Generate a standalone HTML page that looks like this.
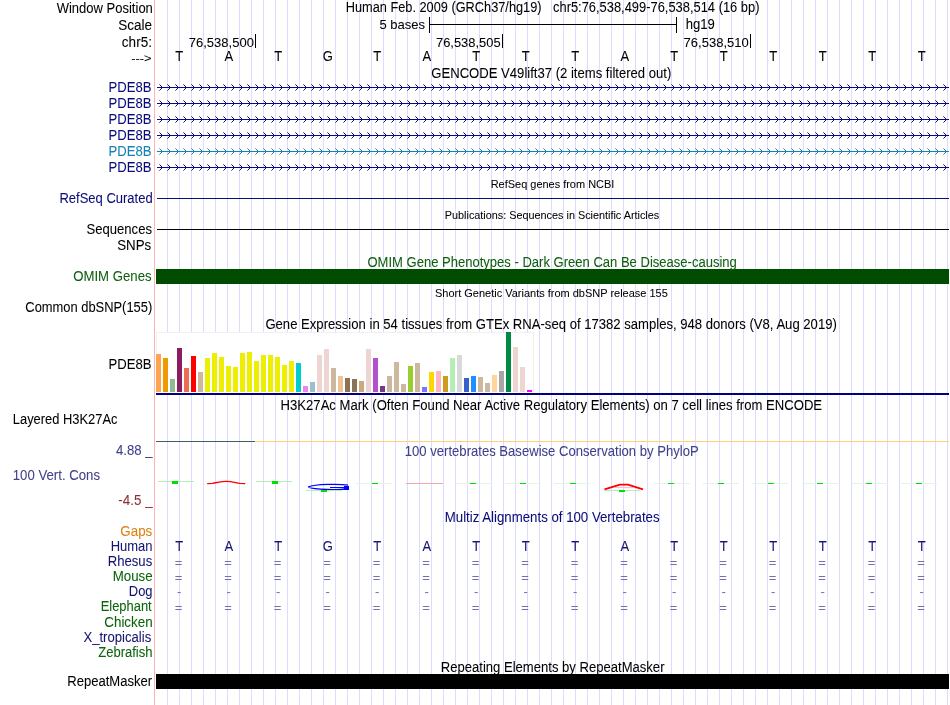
<!DOCTYPE html>
<html><head><meta charset="utf-8"><style>
html,body{margin:0;padding:0;background:#fff;width:950px;height:705px;overflow:hidden}
svg{display:block;will-change:transform}
text{font-family:"Liberation Sans",sans-serif}
</style></head><body>
<svg width="950" height="705" viewBox="0 0 950 705">
<rect width="950" height="705" fill="#fff"/>
<g shape-rendering="crispEdges">
<rect x="167" y="0" width="1" height="705" fill="#dcdcff" />
<rect x="179" y="0" width="1" height="705" fill="#dcdcff" />
<rect x="191" y="0" width="1" height="705" fill="#dcdcff" />
<rect x="203" y="0" width="1" height="705" fill="#dcdcff" />
<rect x="215" y="0" width="1" height="705" fill="#dcdcff" />
<rect x="227" y="0" width="1" height="705" fill="#dcdcff" />
<rect x="239" y="0" width="1" height="705" fill="#dcdcff" />
<rect x="251" y="0" width="1" height="705" fill="#dcdcff" />
<rect x="263" y="0" width="1" height="705" fill="#dcdcff" />
<rect x="275" y="0" width="1" height="705" fill="#dcdcff" />
<rect x="287" y="0" width="1" height="705" fill="#dcdcff" />
<rect x="299" y="0" width="1" height="705" fill="#dcdcff" />
<rect x="311" y="0" width="1" height="705" fill="#dcdcff" />
<rect x="323" y="0" width="1" height="705" fill="#dcdcff" />
<rect x="335" y="0" width="1" height="705" fill="#dcdcff" />
<rect x="347" y="0" width="1" height="705" fill="#dcdcff" />
<rect x="359" y="0" width="1" height="705" fill="#dcdcff" />
<rect x="371" y="0" width="1" height="705" fill="#dcdcff" />
<rect x="383" y="0" width="1" height="705" fill="#dcdcff" />
<rect x="395" y="0" width="1" height="705" fill="#dcdcff" />
<rect x="407" y="0" width="1" height="705" fill="#dcdcff" />
<rect x="419" y="0" width="1" height="705" fill="#dcdcff" />
<rect x="431" y="0" width="1" height="705" fill="#dcdcff" />
<rect x="443" y="0" width="1" height="705" fill="#dcdcff" />
<rect x="455" y="0" width="1" height="705" fill="#dcdcff" />
<rect x="467" y="0" width="1" height="705" fill="#dcdcff" />
<rect x="479" y="0" width="1" height="705" fill="#dcdcff" />
<rect x="491" y="0" width="1" height="705" fill="#dcdcff" />
<rect x="503" y="0" width="1" height="705" fill="#dcdcff" />
<rect x="515" y="0" width="1" height="705" fill="#dcdcff" />
<rect x="527" y="0" width="1" height="705" fill="#dcdcff" />
<rect x="539" y="0" width="1" height="705" fill="#dcdcff" />
<rect x="551" y="0" width="1" height="705" fill="#dcdcff" />
<rect x="563" y="0" width="1" height="705" fill="#dcdcff" />
<rect x="575" y="0" width="1" height="705" fill="#dcdcff" />
<rect x="587" y="0" width="1" height="705" fill="#dcdcff" />
<rect x="599" y="0" width="1" height="705" fill="#dcdcff" />
<rect x="611" y="0" width="1" height="705" fill="#dcdcff" />
<rect x="623" y="0" width="1" height="705" fill="#dcdcff" />
<rect x="635" y="0" width="1" height="705" fill="#dcdcff" />
<rect x="647" y="0" width="1" height="705" fill="#dcdcff" />
<rect x="659" y="0" width="1" height="705" fill="#dcdcff" />
<rect x="671" y="0" width="1" height="705" fill="#dcdcff" />
<rect x="683" y="0" width="1" height="705" fill="#dcdcff" />
<rect x="695" y="0" width="1" height="705" fill="#dcdcff" />
<rect x="707" y="0" width="1" height="705" fill="#dcdcff" />
<rect x="719" y="0" width="1" height="705" fill="#dcdcff" />
<rect x="731" y="0" width="1" height="705" fill="#dcdcff" />
<rect x="743" y="0" width="1" height="705" fill="#dcdcff" />
<rect x="755" y="0" width="1" height="705" fill="#dcdcff" />
<rect x="767" y="0" width="1" height="705" fill="#dcdcff" />
<rect x="779" y="0" width="1" height="705" fill="#dcdcff" />
<rect x="791" y="0" width="1" height="705" fill="#dcdcff" />
<rect x="803" y="0" width="1" height="705" fill="#dcdcff" />
<rect x="815" y="0" width="1" height="705" fill="#dcdcff" />
<rect x="827" y="0" width="1" height="705" fill="#dcdcff" />
<rect x="839" y="0" width="1" height="705" fill="#dcdcff" />
<rect x="851" y="0" width="1" height="705" fill="#dcdcff" />
<rect x="863" y="0" width="1" height="705" fill="#dcdcff" />
<rect x="875" y="0" width="1" height="705" fill="#dcdcff" />
<rect x="887" y="0" width="1" height="705" fill="#dcdcff" />
<rect x="899" y="0" width="1" height="705" fill="#dcdcff" />
<rect x="911" y="0" width="1" height="705" fill="#dcdcff" />
<rect x="923" y="0" width="1" height="705" fill="#dcdcff" />
<rect x="935" y="0" width="1" height="705" fill="#dcdcff" />
<rect x="947" y="0" width="1" height="705" fill="#dcdcff" />
<rect x="154" y="0" width="1" height="705" fill="#ffb4b4" />
<rect x="429" y="17" width="1" height="16" fill="#000" />
<rect x="676" y="17" width="1" height="16" fill="#000" />
<rect x="429" y="24" width="248" height="1" fill="#000" />
<rect x="255" y="34" width="1" height="14" fill="#000" />
<rect x="502" y="34" width="1" height="14" fill="#000" />
<rect x="750" y="34" width="1" height="14" fill="#000" />
<text transform="translate(179.25 61) scale(1 1.1)" font-size="13" text-anchor="middle" fill="#000" stroke="#000" stroke-width="0.05">T</text>
<text transform="translate(228.75 61) scale(1 1.1)" font-size="13" text-anchor="middle" fill="#000" stroke="#000" stroke-width="0.05">A</text>
<text transform="translate(278.25 61) scale(1 1.1)" font-size="13" text-anchor="middle" fill="#000" stroke="#000" stroke-width="0.05">T</text>
<text transform="translate(327.75 61) scale(1 1.1)" font-size="13" text-anchor="middle" fill="#000" stroke="#000" stroke-width="0.05">G</text>
<text transform="translate(377.25 61) scale(1 1.1)" font-size="13" text-anchor="middle" fill="#000" stroke="#000" stroke-width="0.05">T</text>
<text transform="translate(426.75 61) scale(1 1.1)" font-size="13" text-anchor="middle" fill="#000" stroke="#000" stroke-width="0.05">A</text>
<text transform="translate(476.25 61) scale(1 1.1)" font-size="13" text-anchor="middle" fill="#000" stroke="#000" stroke-width="0.05">T</text>
<text transform="translate(525.75 61) scale(1 1.1)" font-size="13" text-anchor="middle" fill="#000" stroke="#000" stroke-width="0.05">T</text>
<text transform="translate(575.25 61) scale(1 1.1)" font-size="13" text-anchor="middle" fill="#000" stroke="#000" stroke-width="0.05">T</text>
<text transform="translate(624.75 61) scale(1 1.1)" font-size="13" text-anchor="middle" fill="#000" stroke="#000" stroke-width="0.05">A</text>
<text transform="translate(674.25 61) scale(1 1.1)" font-size="13" text-anchor="middle" fill="#000" stroke="#000" stroke-width="0.05">T</text>
<text transform="translate(723.75 61) scale(1 1.1)" font-size="13" text-anchor="middle" fill="#000" stroke="#000" stroke-width="0.05">T</text>
<text transform="translate(773.25 61) scale(1 1.1)" font-size="13" text-anchor="middle" fill="#000" stroke="#000" stroke-width="0.05">T</text>
<text transform="translate(822.75 61) scale(1 1.1)" font-size="13" text-anchor="middle" fill="#000" stroke="#000" stroke-width="0.05">T</text>
<text transform="translate(872.25 61) scale(1 1.1)" font-size="13" text-anchor="middle" fill="#000" stroke="#000" stroke-width="0.05">T</text>
<text transform="translate(921.75 61) scale(1 1.1)" font-size="13" text-anchor="middle" fill="#000" stroke="#000" stroke-width="0.05">T</text>
<rect x="157" y="87" width="792" height="1" fill="#0c0c78" />
<path d="M161 86h1v3h-1zM160 85h1v1h-1zM160 89h1v1h-1zM169 86h1v3h-1zM168 85h1v1h-1zM168 89h1v1h-1zM177 86h1v3h-1zM176 85h1v1h-1zM176 89h1v1h-1zM185 86h1v3h-1zM184 85h1v1h-1zM184 89h1v1h-1zM193 86h1v3h-1zM192 85h1v1h-1zM192 89h1v1h-1zM201 86h1v3h-1zM200 85h1v1h-1zM200 89h1v1h-1zM209 86h1v3h-1zM208 85h1v1h-1zM208 89h1v1h-1zM217 86h1v3h-1zM216 85h1v1h-1zM216 89h1v1h-1zM225 86h1v3h-1zM224 85h1v1h-1zM224 89h1v1h-1zM233 86h1v3h-1zM232 85h1v1h-1zM232 89h1v1h-1zM241 86h1v3h-1zM240 85h1v1h-1zM240 89h1v1h-1zM249 86h1v3h-1zM248 85h1v1h-1zM248 89h1v1h-1zM257 86h1v3h-1zM256 85h1v1h-1zM256 89h1v1h-1zM265 86h1v3h-1zM264 85h1v1h-1zM264 89h1v1h-1zM273 86h1v3h-1zM272 85h1v1h-1zM272 89h1v1h-1zM281 86h1v3h-1zM280 85h1v1h-1zM280 89h1v1h-1zM289 86h1v3h-1zM288 85h1v1h-1zM288 89h1v1h-1zM297 86h1v3h-1zM296 85h1v1h-1zM296 89h1v1h-1zM305 86h1v3h-1zM304 85h1v1h-1zM304 89h1v1h-1zM313 86h1v3h-1zM312 85h1v1h-1zM312 89h1v1h-1zM321 86h1v3h-1zM320 85h1v1h-1zM320 89h1v1h-1zM329 86h1v3h-1zM328 85h1v1h-1zM328 89h1v1h-1zM337 86h1v3h-1zM336 85h1v1h-1zM336 89h1v1h-1zM345 86h1v3h-1zM344 85h1v1h-1zM344 89h1v1h-1zM353 86h1v3h-1zM352 85h1v1h-1zM352 89h1v1h-1zM361 86h1v3h-1zM360 85h1v1h-1zM360 89h1v1h-1zM369 86h1v3h-1zM368 85h1v1h-1zM368 89h1v1h-1zM377 86h1v3h-1zM376 85h1v1h-1zM376 89h1v1h-1zM385 86h1v3h-1zM384 85h1v1h-1zM384 89h1v1h-1zM393 86h1v3h-1zM392 85h1v1h-1zM392 89h1v1h-1zM401 86h1v3h-1zM400 85h1v1h-1zM400 89h1v1h-1zM409 86h1v3h-1zM408 85h1v1h-1zM408 89h1v1h-1zM417 86h1v3h-1zM416 85h1v1h-1zM416 89h1v1h-1zM425 86h1v3h-1zM424 85h1v1h-1zM424 89h1v1h-1zM433 86h1v3h-1zM432 85h1v1h-1zM432 89h1v1h-1zM441 86h1v3h-1zM440 85h1v1h-1zM440 89h1v1h-1zM449 86h1v3h-1zM448 85h1v1h-1zM448 89h1v1h-1zM457 86h1v3h-1zM456 85h1v1h-1zM456 89h1v1h-1zM465 86h1v3h-1zM464 85h1v1h-1zM464 89h1v1h-1zM473 86h1v3h-1zM472 85h1v1h-1zM472 89h1v1h-1zM481 86h1v3h-1zM480 85h1v1h-1zM480 89h1v1h-1zM489 86h1v3h-1zM488 85h1v1h-1zM488 89h1v1h-1zM497 86h1v3h-1zM496 85h1v1h-1zM496 89h1v1h-1zM505 86h1v3h-1zM504 85h1v1h-1zM504 89h1v1h-1zM513 86h1v3h-1zM512 85h1v1h-1zM512 89h1v1h-1zM521 86h1v3h-1zM520 85h1v1h-1zM520 89h1v1h-1zM529 86h1v3h-1zM528 85h1v1h-1zM528 89h1v1h-1zM537 86h1v3h-1zM536 85h1v1h-1zM536 89h1v1h-1zM545 86h1v3h-1zM544 85h1v1h-1zM544 89h1v1h-1zM553 86h1v3h-1zM552 85h1v1h-1zM552 89h1v1h-1zM561 86h1v3h-1zM560 85h1v1h-1zM560 89h1v1h-1zM569 86h1v3h-1zM568 85h1v1h-1zM568 89h1v1h-1zM577 86h1v3h-1zM576 85h1v1h-1zM576 89h1v1h-1zM585 86h1v3h-1zM584 85h1v1h-1zM584 89h1v1h-1zM593 86h1v3h-1zM592 85h1v1h-1zM592 89h1v1h-1zM601 86h1v3h-1zM600 85h1v1h-1zM600 89h1v1h-1zM609 86h1v3h-1zM608 85h1v1h-1zM608 89h1v1h-1zM617 86h1v3h-1zM616 85h1v1h-1zM616 89h1v1h-1zM625 86h1v3h-1zM624 85h1v1h-1zM624 89h1v1h-1zM633 86h1v3h-1zM632 85h1v1h-1zM632 89h1v1h-1zM641 86h1v3h-1zM640 85h1v1h-1zM640 89h1v1h-1zM649 86h1v3h-1zM648 85h1v1h-1zM648 89h1v1h-1zM657 86h1v3h-1zM656 85h1v1h-1zM656 89h1v1h-1zM665 86h1v3h-1zM664 85h1v1h-1zM664 89h1v1h-1zM673 86h1v3h-1zM672 85h1v1h-1zM672 89h1v1h-1zM681 86h1v3h-1zM680 85h1v1h-1zM680 89h1v1h-1zM689 86h1v3h-1zM688 85h1v1h-1zM688 89h1v1h-1zM697 86h1v3h-1zM696 85h1v1h-1zM696 89h1v1h-1zM705 86h1v3h-1zM704 85h1v1h-1zM704 89h1v1h-1zM713 86h1v3h-1zM712 85h1v1h-1zM712 89h1v1h-1zM721 86h1v3h-1zM720 85h1v1h-1zM720 89h1v1h-1zM729 86h1v3h-1zM728 85h1v1h-1zM728 89h1v1h-1zM737 86h1v3h-1zM736 85h1v1h-1zM736 89h1v1h-1zM745 86h1v3h-1zM744 85h1v1h-1zM744 89h1v1h-1zM753 86h1v3h-1zM752 85h1v1h-1zM752 89h1v1h-1zM761 86h1v3h-1zM760 85h1v1h-1zM760 89h1v1h-1zM769 86h1v3h-1zM768 85h1v1h-1zM768 89h1v1h-1zM777 86h1v3h-1zM776 85h1v1h-1zM776 89h1v1h-1zM785 86h1v3h-1zM784 85h1v1h-1zM784 89h1v1h-1zM793 86h1v3h-1zM792 85h1v1h-1zM792 89h1v1h-1zM801 86h1v3h-1zM800 85h1v1h-1zM800 89h1v1h-1zM809 86h1v3h-1zM808 85h1v1h-1zM808 89h1v1h-1zM817 86h1v3h-1zM816 85h1v1h-1zM816 89h1v1h-1zM825 86h1v3h-1zM824 85h1v1h-1zM824 89h1v1h-1zM833 86h1v3h-1zM832 85h1v1h-1zM832 89h1v1h-1zM841 86h1v3h-1zM840 85h1v1h-1zM840 89h1v1h-1zM849 86h1v3h-1zM848 85h1v1h-1zM848 89h1v1h-1zM857 86h1v3h-1zM856 85h1v1h-1zM856 89h1v1h-1zM865 86h1v3h-1zM864 85h1v1h-1zM864 89h1v1h-1zM873 86h1v3h-1zM872 85h1v1h-1zM872 89h1v1h-1zM881 86h1v3h-1zM880 85h1v1h-1zM880 89h1v1h-1zM889 86h1v3h-1zM888 85h1v1h-1zM888 89h1v1h-1zM897 86h1v3h-1zM896 85h1v1h-1zM896 89h1v1h-1zM905 86h1v3h-1zM904 85h1v1h-1zM904 89h1v1h-1zM913 86h1v3h-1zM912 85h1v1h-1zM912 89h1v1h-1zM921 86h1v3h-1zM920 85h1v1h-1zM920 89h1v1h-1zM929 86h1v3h-1zM928 85h1v1h-1zM928 89h1v1h-1zM937 86h1v3h-1zM936 85h1v1h-1zM936 89h1v1h-1zM945 86h1v3h-1zM944 85h1v1h-1zM944 89h1v1h-1z" fill="#0c0c78"/>
<path d="M159 84h1v1h-1zM159 90h1v1h-1zM167 84h1v1h-1zM167 90h1v1h-1zM175 84h1v1h-1zM175 90h1v1h-1zM183 84h1v1h-1zM183 90h1v1h-1zM191 84h1v1h-1zM191 90h1v1h-1zM199 84h1v1h-1zM199 90h1v1h-1zM207 84h1v1h-1zM207 90h1v1h-1zM215 84h1v1h-1zM215 90h1v1h-1zM223 84h1v1h-1zM223 90h1v1h-1zM231 84h1v1h-1zM231 90h1v1h-1zM239 84h1v1h-1zM239 90h1v1h-1zM247 84h1v1h-1zM247 90h1v1h-1zM255 84h1v1h-1zM255 90h1v1h-1zM263 84h1v1h-1zM263 90h1v1h-1zM271 84h1v1h-1zM271 90h1v1h-1zM279 84h1v1h-1zM279 90h1v1h-1zM287 84h1v1h-1zM287 90h1v1h-1zM295 84h1v1h-1zM295 90h1v1h-1zM303 84h1v1h-1zM303 90h1v1h-1zM311 84h1v1h-1zM311 90h1v1h-1zM319 84h1v1h-1zM319 90h1v1h-1zM327 84h1v1h-1zM327 90h1v1h-1zM335 84h1v1h-1zM335 90h1v1h-1zM343 84h1v1h-1zM343 90h1v1h-1zM351 84h1v1h-1zM351 90h1v1h-1zM359 84h1v1h-1zM359 90h1v1h-1zM367 84h1v1h-1zM367 90h1v1h-1zM375 84h1v1h-1zM375 90h1v1h-1zM383 84h1v1h-1zM383 90h1v1h-1zM391 84h1v1h-1zM391 90h1v1h-1zM399 84h1v1h-1zM399 90h1v1h-1zM407 84h1v1h-1zM407 90h1v1h-1zM415 84h1v1h-1zM415 90h1v1h-1zM423 84h1v1h-1zM423 90h1v1h-1zM431 84h1v1h-1zM431 90h1v1h-1zM439 84h1v1h-1zM439 90h1v1h-1zM447 84h1v1h-1zM447 90h1v1h-1zM455 84h1v1h-1zM455 90h1v1h-1zM463 84h1v1h-1zM463 90h1v1h-1zM471 84h1v1h-1zM471 90h1v1h-1zM479 84h1v1h-1zM479 90h1v1h-1zM487 84h1v1h-1zM487 90h1v1h-1zM495 84h1v1h-1zM495 90h1v1h-1zM503 84h1v1h-1zM503 90h1v1h-1zM511 84h1v1h-1zM511 90h1v1h-1zM519 84h1v1h-1zM519 90h1v1h-1zM527 84h1v1h-1zM527 90h1v1h-1zM535 84h1v1h-1zM535 90h1v1h-1zM543 84h1v1h-1zM543 90h1v1h-1zM551 84h1v1h-1zM551 90h1v1h-1zM559 84h1v1h-1zM559 90h1v1h-1zM567 84h1v1h-1zM567 90h1v1h-1zM575 84h1v1h-1zM575 90h1v1h-1zM583 84h1v1h-1zM583 90h1v1h-1zM591 84h1v1h-1zM591 90h1v1h-1zM599 84h1v1h-1zM599 90h1v1h-1zM607 84h1v1h-1zM607 90h1v1h-1zM615 84h1v1h-1zM615 90h1v1h-1zM623 84h1v1h-1zM623 90h1v1h-1zM631 84h1v1h-1zM631 90h1v1h-1zM639 84h1v1h-1zM639 90h1v1h-1zM647 84h1v1h-1zM647 90h1v1h-1zM655 84h1v1h-1zM655 90h1v1h-1zM663 84h1v1h-1zM663 90h1v1h-1zM671 84h1v1h-1zM671 90h1v1h-1zM679 84h1v1h-1zM679 90h1v1h-1zM687 84h1v1h-1zM687 90h1v1h-1zM695 84h1v1h-1zM695 90h1v1h-1zM703 84h1v1h-1zM703 90h1v1h-1zM711 84h1v1h-1zM711 90h1v1h-1zM719 84h1v1h-1zM719 90h1v1h-1zM727 84h1v1h-1zM727 90h1v1h-1zM735 84h1v1h-1zM735 90h1v1h-1zM743 84h1v1h-1zM743 90h1v1h-1zM751 84h1v1h-1zM751 90h1v1h-1zM759 84h1v1h-1zM759 90h1v1h-1zM767 84h1v1h-1zM767 90h1v1h-1zM775 84h1v1h-1zM775 90h1v1h-1zM783 84h1v1h-1zM783 90h1v1h-1zM791 84h1v1h-1zM791 90h1v1h-1zM799 84h1v1h-1zM799 90h1v1h-1zM807 84h1v1h-1zM807 90h1v1h-1zM815 84h1v1h-1zM815 90h1v1h-1zM823 84h1v1h-1zM823 90h1v1h-1zM831 84h1v1h-1zM831 90h1v1h-1zM839 84h1v1h-1zM839 90h1v1h-1zM847 84h1v1h-1zM847 90h1v1h-1zM855 84h1v1h-1zM855 90h1v1h-1zM863 84h1v1h-1zM863 90h1v1h-1zM871 84h1v1h-1zM871 90h1v1h-1zM879 84h1v1h-1zM879 90h1v1h-1zM887 84h1v1h-1zM887 90h1v1h-1zM895 84h1v1h-1zM895 90h1v1h-1zM903 84h1v1h-1zM903 90h1v1h-1zM911 84h1v1h-1zM911 90h1v1h-1zM919 84h1v1h-1zM919 90h1v1h-1zM927 84h1v1h-1zM927 90h1v1h-1zM935 84h1v1h-1zM935 90h1v1h-1zM943 84h1v1h-1zM943 90h1v1h-1z" fill="#0c0c78" fill-opacity="0.55"/>
<rect x="157" y="103" width="792" height="1" fill="#0c0c78" />
<path d="M161 102h1v3h-1zM160 101h1v1h-1zM160 105h1v1h-1zM169 102h1v3h-1zM168 101h1v1h-1zM168 105h1v1h-1zM177 102h1v3h-1zM176 101h1v1h-1zM176 105h1v1h-1zM185 102h1v3h-1zM184 101h1v1h-1zM184 105h1v1h-1zM193 102h1v3h-1zM192 101h1v1h-1zM192 105h1v1h-1zM201 102h1v3h-1zM200 101h1v1h-1zM200 105h1v1h-1zM209 102h1v3h-1zM208 101h1v1h-1zM208 105h1v1h-1zM217 102h1v3h-1zM216 101h1v1h-1zM216 105h1v1h-1zM225 102h1v3h-1zM224 101h1v1h-1zM224 105h1v1h-1zM233 102h1v3h-1zM232 101h1v1h-1zM232 105h1v1h-1zM241 102h1v3h-1zM240 101h1v1h-1zM240 105h1v1h-1zM249 102h1v3h-1zM248 101h1v1h-1zM248 105h1v1h-1zM257 102h1v3h-1zM256 101h1v1h-1zM256 105h1v1h-1zM265 102h1v3h-1zM264 101h1v1h-1zM264 105h1v1h-1zM273 102h1v3h-1zM272 101h1v1h-1zM272 105h1v1h-1zM281 102h1v3h-1zM280 101h1v1h-1zM280 105h1v1h-1zM289 102h1v3h-1zM288 101h1v1h-1zM288 105h1v1h-1zM297 102h1v3h-1zM296 101h1v1h-1zM296 105h1v1h-1zM305 102h1v3h-1zM304 101h1v1h-1zM304 105h1v1h-1zM313 102h1v3h-1zM312 101h1v1h-1zM312 105h1v1h-1zM321 102h1v3h-1zM320 101h1v1h-1zM320 105h1v1h-1zM329 102h1v3h-1zM328 101h1v1h-1zM328 105h1v1h-1zM337 102h1v3h-1zM336 101h1v1h-1zM336 105h1v1h-1zM345 102h1v3h-1zM344 101h1v1h-1zM344 105h1v1h-1zM353 102h1v3h-1zM352 101h1v1h-1zM352 105h1v1h-1zM361 102h1v3h-1zM360 101h1v1h-1zM360 105h1v1h-1zM369 102h1v3h-1zM368 101h1v1h-1zM368 105h1v1h-1zM377 102h1v3h-1zM376 101h1v1h-1zM376 105h1v1h-1zM385 102h1v3h-1zM384 101h1v1h-1zM384 105h1v1h-1zM393 102h1v3h-1zM392 101h1v1h-1zM392 105h1v1h-1zM401 102h1v3h-1zM400 101h1v1h-1zM400 105h1v1h-1zM409 102h1v3h-1zM408 101h1v1h-1zM408 105h1v1h-1zM417 102h1v3h-1zM416 101h1v1h-1zM416 105h1v1h-1zM425 102h1v3h-1zM424 101h1v1h-1zM424 105h1v1h-1zM433 102h1v3h-1zM432 101h1v1h-1zM432 105h1v1h-1zM441 102h1v3h-1zM440 101h1v1h-1zM440 105h1v1h-1zM449 102h1v3h-1zM448 101h1v1h-1zM448 105h1v1h-1zM457 102h1v3h-1zM456 101h1v1h-1zM456 105h1v1h-1zM465 102h1v3h-1zM464 101h1v1h-1zM464 105h1v1h-1zM473 102h1v3h-1zM472 101h1v1h-1zM472 105h1v1h-1zM481 102h1v3h-1zM480 101h1v1h-1zM480 105h1v1h-1zM489 102h1v3h-1zM488 101h1v1h-1zM488 105h1v1h-1zM497 102h1v3h-1zM496 101h1v1h-1zM496 105h1v1h-1zM505 102h1v3h-1zM504 101h1v1h-1zM504 105h1v1h-1zM513 102h1v3h-1zM512 101h1v1h-1zM512 105h1v1h-1zM521 102h1v3h-1zM520 101h1v1h-1zM520 105h1v1h-1zM529 102h1v3h-1zM528 101h1v1h-1zM528 105h1v1h-1zM537 102h1v3h-1zM536 101h1v1h-1zM536 105h1v1h-1zM545 102h1v3h-1zM544 101h1v1h-1zM544 105h1v1h-1zM553 102h1v3h-1zM552 101h1v1h-1zM552 105h1v1h-1zM561 102h1v3h-1zM560 101h1v1h-1zM560 105h1v1h-1zM569 102h1v3h-1zM568 101h1v1h-1zM568 105h1v1h-1zM577 102h1v3h-1zM576 101h1v1h-1zM576 105h1v1h-1zM585 102h1v3h-1zM584 101h1v1h-1zM584 105h1v1h-1zM593 102h1v3h-1zM592 101h1v1h-1zM592 105h1v1h-1zM601 102h1v3h-1zM600 101h1v1h-1zM600 105h1v1h-1zM609 102h1v3h-1zM608 101h1v1h-1zM608 105h1v1h-1zM617 102h1v3h-1zM616 101h1v1h-1zM616 105h1v1h-1zM625 102h1v3h-1zM624 101h1v1h-1zM624 105h1v1h-1zM633 102h1v3h-1zM632 101h1v1h-1zM632 105h1v1h-1zM641 102h1v3h-1zM640 101h1v1h-1zM640 105h1v1h-1zM649 102h1v3h-1zM648 101h1v1h-1zM648 105h1v1h-1zM657 102h1v3h-1zM656 101h1v1h-1zM656 105h1v1h-1zM665 102h1v3h-1zM664 101h1v1h-1zM664 105h1v1h-1zM673 102h1v3h-1zM672 101h1v1h-1zM672 105h1v1h-1zM681 102h1v3h-1zM680 101h1v1h-1zM680 105h1v1h-1zM689 102h1v3h-1zM688 101h1v1h-1zM688 105h1v1h-1zM697 102h1v3h-1zM696 101h1v1h-1zM696 105h1v1h-1zM705 102h1v3h-1zM704 101h1v1h-1zM704 105h1v1h-1zM713 102h1v3h-1zM712 101h1v1h-1zM712 105h1v1h-1zM721 102h1v3h-1zM720 101h1v1h-1zM720 105h1v1h-1zM729 102h1v3h-1zM728 101h1v1h-1zM728 105h1v1h-1zM737 102h1v3h-1zM736 101h1v1h-1zM736 105h1v1h-1zM745 102h1v3h-1zM744 101h1v1h-1zM744 105h1v1h-1zM753 102h1v3h-1zM752 101h1v1h-1zM752 105h1v1h-1zM761 102h1v3h-1zM760 101h1v1h-1zM760 105h1v1h-1zM769 102h1v3h-1zM768 101h1v1h-1zM768 105h1v1h-1zM777 102h1v3h-1zM776 101h1v1h-1zM776 105h1v1h-1zM785 102h1v3h-1zM784 101h1v1h-1zM784 105h1v1h-1zM793 102h1v3h-1zM792 101h1v1h-1zM792 105h1v1h-1zM801 102h1v3h-1zM800 101h1v1h-1zM800 105h1v1h-1zM809 102h1v3h-1zM808 101h1v1h-1zM808 105h1v1h-1zM817 102h1v3h-1zM816 101h1v1h-1zM816 105h1v1h-1zM825 102h1v3h-1zM824 101h1v1h-1zM824 105h1v1h-1zM833 102h1v3h-1zM832 101h1v1h-1zM832 105h1v1h-1zM841 102h1v3h-1zM840 101h1v1h-1zM840 105h1v1h-1zM849 102h1v3h-1zM848 101h1v1h-1zM848 105h1v1h-1zM857 102h1v3h-1zM856 101h1v1h-1zM856 105h1v1h-1zM865 102h1v3h-1zM864 101h1v1h-1zM864 105h1v1h-1zM873 102h1v3h-1zM872 101h1v1h-1zM872 105h1v1h-1zM881 102h1v3h-1zM880 101h1v1h-1zM880 105h1v1h-1zM889 102h1v3h-1zM888 101h1v1h-1zM888 105h1v1h-1zM897 102h1v3h-1zM896 101h1v1h-1zM896 105h1v1h-1zM905 102h1v3h-1zM904 101h1v1h-1zM904 105h1v1h-1zM913 102h1v3h-1zM912 101h1v1h-1zM912 105h1v1h-1zM921 102h1v3h-1zM920 101h1v1h-1zM920 105h1v1h-1zM929 102h1v3h-1zM928 101h1v1h-1zM928 105h1v1h-1zM937 102h1v3h-1zM936 101h1v1h-1zM936 105h1v1h-1zM945 102h1v3h-1zM944 101h1v1h-1zM944 105h1v1h-1z" fill="#0c0c78"/>
<path d="M159 100h1v1h-1zM159 106h1v1h-1zM167 100h1v1h-1zM167 106h1v1h-1zM175 100h1v1h-1zM175 106h1v1h-1zM183 100h1v1h-1zM183 106h1v1h-1zM191 100h1v1h-1zM191 106h1v1h-1zM199 100h1v1h-1zM199 106h1v1h-1zM207 100h1v1h-1zM207 106h1v1h-1zM215 100h1v1h-1zM215 106h1v1h-1zM223 100h1v1h-1zM223 106h1v1h-1zM231 100h1v1h-1zM231 106h1v1h-1zM239 100h1v1h-1zM239 106h1v1h-1zM247 100h1v1h-1zM247 106h1v1h-1zM255 100h1v1h-1zM255 106h1v1h-1zM263 100h1v1h-1zM263 106h1v1h-1zM271 100h1v1h-1zM271 106h1v1h-1zM279 100h1v1h-1zM279 106h1v1h-1zM287 100h1v1h-1zM287 106h1v1h-1zM295 100h1v1h-1zM295 106h1v1h-1zM303 100h1v1h-1zM303 106h1v1h-1zM311 100h1v1h-1zM311 106h1v1h-1zM319 100h1v1h-1zM319 106h1v1h-1zM327 100h1v1h-1zM327 106h1v1h-1zM335 100h1v1h-1zM335 106h1v1h-1zM343 100h1v1h-1zM343 106h1v1h-1zM351 100h1v1h-1zM351 106h1v1h-1zM359 100h1v1h-1zM359 106h1v1h-1zM367 100h1v1h-1zM367 106h1v1h-1zM375 100h1v1h-1zM375 106h1v1h-1zM383 100h1v1h-1zM383 106h1v1h-1zM391 100h1v1h-1zM391 106h1v1h-1zM399 100h1v1h-1zM399 106h1v1h-1zM407 100h1v1h-1zM407 106h1v1h-1zM415 100h1v1h-1zM415 106h1v1h-1zM423 100h1v1h-1zM423 106h1v1h-1zM431 100h1v1h-1zM431 106h1v1h-1zM439 100h1v1h-1zM439 106h1v1h-1zM447 100h1v1h-1zM447 106h1v1h-1zM455 100h1v1h-1zM455 106h1v1h-1zM463 100h1v1h-1zM463 106h1v1h-1zM471 100h1v1h-1zM471 106h1v1h-1zM479 100h1v1h-1zM479 106h1v1h-1zM487 100h1v1h-1zM487 106h1v1h-1zM495 100h1v1h-1zM495 106h1v1h-1zM503 100h1v1h-1zM503 106h1v1h-1zM511 100h1v1h-1zM511 106h1v1h-1zM519 100h1v1h-1zM519 106h1v1h-1zM527 100h1v1h-1zM527 106h1v1h-1zM535 100h1v1h-1zM535 106h1v1h-1zM543 100h1v1h-1zM543 106h1v1h-1zM551 100h1v1h-1zM551 106h1v1h-1zM559 100h1v1h-1zM559 106h1v1h-1zM567 100h1v1h-1zM567 106h1v1h-1zM575 100h1v1h-1zM575 106h1v1h-1zM583 100h1v1h-1zM583 106h1v1h-1zM591 100h1v1h-1zM591 106h1v1h-1zM599 100h1v1h-1zM599 106h1v1h-1zM607 100h1v1h-1zM607 106h1v1h-1zM615 100h1v1h-1zM615 106h1v1h-1zM623 100h1v1h-1zM623 106h1v1h-1zM631 100h1v1h-1zM631 106h1v1h-1zM639 100h1v1h-1zM639 106h1v1h-1zM647 100h1v1h-1zM647 106h1v1h-1zM655 100h1v1h-1zM655 106h1v1h-1zM663 100h1v1h-1zM663 106h1v1h-1zM671 100h1v1h-1zM671 106h1v1h-1zM679 100h1v1h-1zM679 106h1v1h-1zM687 100h1v1h-1zM687 106h1v1h-1zM695 100h1v1h-1zM695 106h1v1h-1zM703 100h1v1h-1zM703 106h1v1h-1zM711 100h1v1h-1zM711 106h1v1h-1zM719 100h1v1h-1zM719 106h1v1h-1zM727 100h1v1h-1zM727 106h1v1h-1zM735 100h1v1h-1zM735 106h1v1h-1zM743 100h1v1h-1zM743 106h1v1h-1zM751 100h1v1h-1zM751 106h1v1h-1zM759 100h1v1h-1zM759 106h1v1h-1zM767 100h1v1h-1zM767 106h1v1h-1zM775 100h1v1h-1zM775 106h1v1h-1zM783 100h1v1h-1zM783 106h1v1h-1zM791 100h1v1h-1zM791 106h1v1h-1zM799 100h1v1h-1zM799 106h1v1h-1zM807 100h1v1h-1zM807 106h1v1h-1zM815 100h1v1h-1zM815 106h1v1h-1zM823 100h1v1h-1zM823 106h1v1h-1zM831 100h1v1h-1zM831 106h1v1h-1zM839 100h1v1h-1zM839 106h1v1h-1zM847 100h1v1h-1zM847 106h1v1h-1zM855 100h1v1h-1zM855 106h1v1h-1zM863 100h1v1h-1zM863 106h1v1h-1zM871 100h1v1h-1zM871 106h1v1h-1zM879 100h1v1h-1zM879 106h1v1h-1zM887 100h1v1h-1zM887 106h1v1h-1zM895 100h1v1h-1zM895 106h1v1h-1zM903 100h1v1h-1zM903 106h1v1h-1zM911 100h1v1h-1zM911 106h1v1h-1zM919 100h1v1h-1zM919 106h1v1h-1zM927 100h1v1h-1zM927 106h1v1h-1zM935 100h1v1h-1zM935 106h1v1h-1zM943 100h1v1h-1zM943 106h1v1h-1z" fill="#0c0c78" fill-opacity="0.55"/>
<rect x="157" y="119" width="792" height="1" fill="#0c0c78" />
<path d="M161 118h1v3h-1zM160 117h1v1h-1zM160 121h1v1h-1zM169 118h1v3h-1zM168 117h1v1h-1zM168 121h1v1h-1zM177 118h1v3h-1zM176 117h1v1h-1zM176 121h1v1h-1zM185 118h1v3h-1zM184 117h1v1h-1zM184 121h1v1h-1zM193 118h1v3h-1zM192 117h1v1h-1zM192 121h1v1h-1zM201 118h1v3h-1zM200 117h1v1h-1zM200 121h1v1h-1zM209 118h1v3h-1zM208 117h1v1h-1zM208 121h1v1h-1zM217 118h1v3h-1zM216 117h1v1h-1zM216 121h1v1h-1zM225 118h1v3h-1zM224 117h1v1h-1zM224 121h1v1h-1zM233 118h1v3h-1zM232 117h1v1h-1zM232 121h1v1h-1zM241 118h1v3h-1zM240 117h1v1h-1zM240 121h1v1h-1zM249 118h1v3h-1zM248 117h1v1h-1zM248 121h1v1h-1zM257 118h1v3h-1zM256 117h1v1h-1zM256 121h1v1h-1zM265 118h1v3h-1zM264 117h1v1h-1zM264 121h1v1h-1zM273 118h1v3h-1zM272 117h1v1h-1zM272 121h1v1h-1zM281 118h1v3h-1zM280 117h1v1h-1zM280 121h1v1h-1zM289 118h1v3h-1zM288 117h1v1h-1zM288 121h1v1h-1zM297 118h1v3h-1zM296 117h1v1h-1zM296 121h1v1h-1zM305 118h1v3h-1zM304 117h1v1h-1zM304 121h1v1h-1zM313 118h1v3h-1zM312 117h1v1h-1zM312 121h1v1h-1zM321 118h1v3h-1zM320 117h1v1h-1zM320 121h1v1h-1zM329 118h1v3h-1zM328 117h1v1h-1zM328 121h1v1h-1zM337 118h1v3h-1zM336 117h1v1h-1zM336 121h1v1h-1zM345 118h1v3h-1zM344 117h1v1h-1zM344 121h1v1h-1zM353 118h1v3h-1zM352 117h1v1h-1zM352 121h1v1h-1zM361 118h1v3h-1zM360 117h1v1h-1zM360 121h1v1h-1zM369 118h1v3h-1zM368 117h1v1h-1zM368 121h1v1h-1zM377 118h1v3h-1zM376 117h1v1h-1zM376 121h1v1h-1zM385 118h1v3h-1zM384 117h1v1h-1zM384 121h1v1h-1zM393 118h1v3h-1zM392 117h1v1h-1zM392 121h1v1h-1zM401 118h1v3h-1zM400 117h1v1h-1zM400 121h1v1h-1zM409 118h1v3h-1zM408 117h1v1h-1zM408 121h1v1h-1zM417 118h1v3h-1zM416 117h1v1h-1zM416 121h1v1h-1zM425 118h1v3h-1zM424 117h1v1h-1zM424 121h1v1h-1zM433 118h1v3h-1zM432 117h1v1h-1zM432 121h1v1h-1zM441 118h1v3h-1zM440 117h1v1h-1zM440 121h1v1h-1zM449 118h1v3h-1zM448 117h1v1h-1zM448 121h1v1h-1zM457 118h1v3h-1zM456 117h1v1h-1zM456 121h1v1h-1zM465 118h1v3h-1zM464 117h1v1h-1zM464 121h1v1h-1zM473 118h1v3h-1zM472 117h1v1h-1zM472 121h1v1h-1zM481 118h1v3h-1zM480 117h1v1h-1zM480 121h1v1h-1zM489 118h1v3h-1zM488 117h1v1h-1zM488 121h1v1h-1zM497 118h1v3h-1zM496 117h1v1h-1zM496 121h1v1h-1zM505 118h1v3h-1zM504 117h1v1h-1zM504 121h1v1h-1zM513 118h1v3h-1zM512 117h1v1h-1zM512 121h1v1h-1zM521 118h1v3h-1zM520 117h1v1h-1zM520 121h1v1h-1zM529 118h1v3h-1zM528 117h1v1h-1zM528 121h1v1h-1zM537 118h1v3h-1zM536 117h1v1h-1zM536 121h1v1h-1zM545 118h1v3h-1zM544 117h1v1h-1zM544 121h1v1h-1zM553 118h1v3h-1zM552 117h1v1h-1zM552 121h1v1h-1zM561 118h1v3h-1zM560 117h1v1h-1zM560 121h1v1h-1zM569 118h1v3h-1zM568 117h1v1h-1zM568 121h1v1h-1zM577 118h1v3h-1zM576 117h1v1h-1zM576 121h1v1h-1zM585 118h1v3h-1zM584 117h1v1h-1zM584 121h1v1h-1zM593 118h1v3h-1zM592 117h1v1h-1zM592 121h1v1h-1zM601 118h1v3h-1zM600 117h1v1h-1zM600 121h1v1h-1zM609 118h1v3h-1zM608 117h1v1h-1zM608 121h1v1h-1zM617 118h1v3h-1zM616 117h1v1h-1zM616 121h1v1h-1zM625 118h1v3h-1zM624 117h1v1h-1zM624 121h1v1h-1zM633 118h1v3h-1zM632 117h1v1h-1zM632 121h1v1h-1zM641 118h1v3h-1zM640 117h1v1h-1zM640 121h1v1h-1zM649 118h1v3h-1zM648 117h1v1h-1zM648 121h1v1h-1zM657 118h1v3h-1zM656 117h1v1h-1zM656 121h1v1h-1zM665 118h1v3h-1zM664 117h1v1h-1zM664 121h1v1h-1zM673 118h1v3h-1zM672 117h1v1h-1zM672 121h1v1h-1zM681 118h1v3h-1zM680 117h1v1h-1zM680 121h1v1h-1zM689 118h1v3h-1zM688 117h1v1h-1zM688 121h1v1h-1zM697 118h1v3h-1zM696 117h1v1h-1zM696 121h1v1h-1zM705 118h1v3h-1zM704 117h1v1h-1zM704 121h1v1h-1zM713 118h1v3h-1zM712 117h1v1h-1zM712 121h1v1h-1zM721 118h1v3h-1zM720 117h1v1h-1zM720 121h1v1h-1zM729 118h1v3h-1zM728 117h1v1h-1zM728 121h1v1h-1zM737 118h1v3h-1zM736 117h1v1h-1zM736 121h1v1h-1zM745 118h1v3h-1zM744 117h1v1h-1zM744 121h1v1h-1zM753 118h1v3h-1zM752 117h1v1h-1zM752 121h1v1h-1zM761 118h1v3h-1zM760 117h1v1h-1zM760 121h1v1h-1zM769 118h1v3h-1zM768 117h1v1h-1zM768 121h1v1h-1zM777 118h1v3h-1zM776 117h1v1h-1zM776 121h1v1h-1zM785 118h1v3h-1zM784 117h1v1h-1zM784 121h1v1h-1zM793 118h1v3h-1zM792 117h1v1h-1zM792 121h1v1h-1zM801 118h1v3h-1zM800 117h1v1h-1zM800 121h1v1h-1zM809 118h1v3h-1zM808 117h1v1h-1zM808 121h1v1h-1zM817 118h1v3h-1zM816 117h1v1h-1zM816 121h1v1h-1zM825 118h1v3h-1zM824 117h1v1h-1zM824 121h1v1h-1zM833 118h1v3h-1zM832 117h1v1h-1zM832 121h1v1h-1zM841 118h1v3h-1zM840 117h1v1h-1zM840 121h1v1h-1zM849 118h1v3h-1zM848 117h1v1h-1zM848 121h1v1h-1zM857 118h1v3h-1zM856 117h1v1h-1zM856 121h1v1h-1zM865 118h1v3h-1zM864 117h1v1h-1zM864 121h1v1h-1zM873 118h1v3h-1zM872 117h1v1h-1zM872 121h1v1h-1zM881 118h1v3h-1zM880 117h1v1h-1zM880 121h1v1h-1zM889 118h1v3h-1zM888 117h1v1h-1zM888 121h1v1h-1zM897 118h1v3h-1zM896 117h1v1h-1zM896 121h1v1h-1zM905 118h1v3h-1zM904 117h1v1h-1zM904 121h1v1h-1zM913 118h1v3h-1zM912 117h1v1h-1zM912 121h1v1h-1zM921 118h1v3h-1zM920 117h1v1h-1zM920 121h1v1h-1zM929 118h1v3h-1zM928 117h1v1h-1zM928 121h1v1h-1zM937 118h1v3h-1zM936 117h1v1h-1zM936 121h1v1h-1zM945 118h1v3h-1zM944 117h1v1h-1zM944 121h1v1h-1z" fill="#0c0c78"/>
<path d="M159 116h1v1h-1zM159 122h1v1h-1zM167 116h1v1h-1zM167 122h1v1h-1zM175 116h1v1h-1zM175 122h1v1h-1zM183 116h1v1h-1zM183 122h1v1h-1zM191 116h1v1h-1zM191 122h1v1h-1zM199 116h1v1h-1zM199 122h1v1h-1zM207 116h1v1h-1zM207 122h1v1h-1zM215 116h1v1h-1zM215 122h1v1h-1zM223 116h1v1h-1zM223 122h1v1h-1zM231 116h1v1h-1zM231 122h1v1h-1zM239 116h1v1h-1zM239 122h1v1h-1zM247 116h1v1h-1zM247 122h1v1h-1zM255 116h1v1h-1zM255 122h1v1h-1zM263 116h1v1h-1zM263 122h1v1h-1zM271 116h1v1h-1zM271 122h1v1h-1zM279 116h1v1h-1zM279 122h1v1h-1zM287 116h1v1h-1zM287 122h1v1h-1zM295 116h1v1h-1zM295 122h1v1h-1zM303 116h1v1h-1zM303 122h1v1h-1zM311 116h1v1h-1zM311 122h1v1h-1zM319 116h1v1h-1zM319 122h1v1h-1zM327 116h1v1h-1zM327 122h1v1h-1zM335 116h1v1h-1zM335 122h1v1h-1zM343 116h1v1h-1zM343 122h1v1h-1zM351 116h1v1h-1zM351 122h1v1h-1zM359 116h1v1h-1zM359 122h1v1h-1zM367 116h1v1h-1zM367 122h1v1h-1zM375 116h1v1h-1zM375 122h1v1h-1zM383 116h1v1h-1zM383 122h1v1h-1zM391 116h1v1h-1zM391 122h1v1h-1zM399 116h1v1h-1zM399 122h1v1h-1zM407 116h1v1h-1zM407 122h1v1h-1zM415 116h1v1h-1zM415 122h1v1h-1zM423 116h1v1h-1zM423 122h1v1h-1zM431 116h1v1h-1zM431 122h1v1h-1zM439 116h1v1h-1zM439 122h1v1h-1zM447 116h1v1h-1zM447 122h1v1h-1zM455 116h1v1h-1zM455 122h1v1h-1zM463 116h1v1h-1zM463 122h1v1h-1zM471 116h1v1h-1zM471 122h1v1h-1zM479 116h1v1h-1zM479 122h1v1h-1zM487 116h1v1h-1zM487 122h1v1h-1zM495 116h1v1h-1zM495 122h1v1h-1zM503 116h1v1h-1zM503 122h1v1h-1zM511 116h1v1h-1zM511 122h1v1h-1zM519 116h1v1h-1zM519 122h1v1h-1zM527 116h1v1h-1zM527 122h1v1h-1zM535 116h1v1h-1zM535 122h1v1h-1zM543 116h1v1h-1zM543 122h1v1h-1zM551 116h1v1h-1zM551 122h1v1h-1zM559 116h1v1h-1zM559 122h1v1h-1zM567 116h1v1h-1zM567 122h1v1h-1zM575 116h1v1h-1zM575 122h1v1h-1zM583 116h1v1h-1zM583 122h1v1h-1zM591 116h1v1h-1zM591 122h1v1h-1zM599 116h1v1h-1zM599 122h1v1h-1zM607 116h1v1h-1zM607 122h1v1h-1zM615 116h1v1h-1zM615 122h1v1h-1zM623 116h1v1h-1zM623 122h1v1h-1zM631 116h1v1h-1zM631 122h1v1h-1zM639 116h1v1h-1zM639 122h1v1h-1zM647 116h1v1h-1zM647 122h1v1h-1zM655 116h1v1h-1zM655 122h1v1h-1zM663 116h1v1h-1zM663 122h1v1h-1zM671 116h1v1h-1zM671 122h1v1h-1zM679 116h1v1h-1zM679 122h1v1h-1zM687 116h1v1h-1zM687 122h1v1h-1zM695 116h1v1h-1zM695 122h1v1h-1zM703 116h1v1h-1zM703 122h1v1h-1zM711 116h1v1h-1zM711 122h1v1h-1zM719 116h1v1h-1zM719 122h1v1h-1zM727 116h1v1h-1zM727 122h1v1h-1zM735 116h1v1h-1zM735 122h1v1h-1zM743 116h1v1h-1zM743 122h1v1h-1zM751 116h1v1h-1zM751 122h1v1h-1zM759 116h1v1h-1zM759 122h1v1h-1zM767 116h1v1h-1zM767 122h1v1h-1zM775 116h1v1h-1zM775 122h1v1h-1zM783 116h1v1h-1zM783 122h1v1h-1zM791 116h1v1h-1zM791 122h1v1h-1zM799 116h1v1h-1zM799 122h1v1h-1zM807 116h1v1h-1zM807 122h1v1h-1zM815 116h1v1h-1zM815 122h1v1h-1zM823 116h1v1h-1zM823 122h1v1h-1zM831 116h1v1h-1zM831 122h1v1h-1zM839 116h1v1h-1zM839 122h1v1h-1zM847 116h1v1h-1zM847 122h1v1h-1zM855 116h1v1h-1zM855 122h1v1h-1zM863 116h1v1h-1zM863 122h1v1h-1zM871 116h1v1h-1zM871 122h1v1h-1zM879 116h1v1h-1zM879 122h1v1h-1zM887 116h1v1h-1zM887 122h1v1h-1zM895 116h1v1h-1zM895 122h1v1h-1zM903 116h1v1h-1zM903 122h1v1h-1zM911 116h1v1h-1zM911 122h1v1h-1zM919 116h1v1h-1zM919 122h1v1h-1zM927 116h1v1h-1zM927 122h1v1h-1zM935 116h1v1h-1zM935 122h1v1h-1zM943 116h1v1h-1zM943 122h1v1h-1z" fill="#0c0c78" fill-opacity="0.55"/>
<rect x="157" y="135" width="792" height="1" fill="#0c0c78" />
<path d="M161 134h1v3h-1zM160 133h1v1h-1zM160 137h1v1h-1zM169 134h1v3h-1zM168 133h1v1h-1zM168 137h1v1h-1zM177 134h1v3h-1zM176 133h1v1h-1zM176 137h1v1h-1zM185 134h1v3h-1zM184 133h1v1h-1zM184 137h1v1h-1zM193 134h1v3h-1zM192 133h1v1h-1zM192 137h1v1h-1zM201 134h1v3h-1zM200 133h1v1h-1zM200 137h1v1h-1zM209 134h1v3h-1zM208 133h1v1h-1zM208 137h1v1h-1zM217 134h1v3h-1zM216 133h1v1h-1zM216 137h1v1h-1zM225 134h1v3h-1zM224 133h1v1h-1zM224 137h1v1h-1zM233 134h1v3h-1zM232 133h1v1h-1zM232 137h1v1h-1zM241 134h1v3h-1zM240 133h1v1h-1zM240 137h1v1h-1zM249 134h1v3h-1zM248 133h1v1h-1zM248 137h1v1h-1zM257 134h1v3h-1zM256 133h1v1h-1zM256 137h1v1h-1zM265 134h1v3h-1zM264 133h1v1h-1zM264 137h1v1h-1zM273 134h1v3h-1zM272 133h1v1h-1zM272 137h1v1h-1zM281 134h1v3h-1zM280 133h1v1h-1zM280 137h1v1h-1zM289 134h1v3h-1zM288 133h1v1h-1zM288 137h1v1h-1zM297 134h1v3h-1zM296 133h1v1h-1zM296 137h1v1h-1zM305 134h1v3h-1zM304 133h1v1h-1zM304 137h1v1h-1zM313 134h1v3h-1zM312 133h1v1h-1zM312 137h1v1h-1zM321 134h1v3h-1zM320 133h1v1h-1zM320 137h1v1h-1zM329 134h1v3h-1zM328 133h1v1h-1zM328 137h1v1h-1zM337 134h1v3h-1zM336 133h1v1h-1zM336 137h1v1h-1zM345 134h1v3h-1zM344 133h1v1h-1zM344 137h1v1h-1zM353 134h1v3h-1zM352 133h1v1h-1zM352 137h1v1h-1zM361 134h1v3h-1zM360 133h1v1h-1zM360 137h1v1h-1zM369 134h1v3h-1zM368 133h1v1h-1zM368 137h1v1h-1zM377 134h1v3h-1zM376 133h1v1h-1zM376 137h1v1h-1zM385 134h1v3h-1zM384 133h1v1h-1zM384 137h1v1h-1zM393 134h1v3h-1zM392 133h1v1h-1zM392 137h1v1h-1zM401 134h1v3h-1zM400 133h1v1h-1zM400 137h1v1h-1zM409 134h1v3h-1zM408 133h1v1h-1zM408 137h1v1h-1zM417 134h1v3h-1zM416 133h1v1h-1zM416 137h1v1h-1zM425 134h1v3h-1zM424 133h1v1h-1zM424 137h1v1h-1zM433 134h1v3h-1zM432 133h1v1h-1zM432 137h1v1h-1zM441 134h1v3h-1zM440 133h1v1h-1zM440 137h1v1h-1zM449 134h1v3h-1zM448 133h1v1h-1zM448 137h1v1h-1zM457 134h1v3h-1zM456 133h1v1h-1zM456 137h1v1h-1zM465 134h1v3h-1zM464 133h1v1h-1zM464 137h1v1h-1zM473 134h1v3h-1zM472 133h1v1h-1zM472 137h1v1h-1zM481 134h1v3h-1zM480 133h1v1h-1zM480 137h1v1h-1zM489 134h1v3h-1zM488 133h1v1h-1zM488 137h1v1h-1zM497 134h1v3h-1zM496 133h1v1h-1zM496 137h1v1h-1zM505 134h1v3h-1zM504 133h1v1h-1zM504 137h1v1h-1zM513 134h1v3h-1zM512 133h1v1h-1zM512 137h1v1h-1zM521 134h1v3h-1zM520 133h1v1h-1zM520 137h1v1h-1zM529 134h1v3h-1zM528 133h1v1h-1zM528 137h1v1h-1zM537 134h1v3h-1zM536 133h1v1h-1zM536 137h1v1h-1zM545 134h1v3h-1zM544 133h1v1h-1zM544 137h1v1h-1zM553 134h1v3h-1zM552 133h1v1h-1zM552 137h1v1h-1zM561 134h1v3h-1zM560 133h1v1h-1zM560 137h1v1h-1zM569 134h1v3h-1zM568 133h1v1h-1zM568 137h1v1h-1zM577 134h1v3h-1zM576 133h1v1h-1zM576 137h1v1h-1zM585 134h1v3h-1zM584 133h1v1h-1zM584 137h1v1h-1zM593 134h1v3h-1zM592 133h1v1h-1zM592 137h1v1h-1zM601 134h1v3h-1zM600 133h1v1h-1zM600 137h1v1h-1zM609 134h1v3h-1zM608 133h1v1h-1zM608 137h1v1h-1zM617 134h1v3h-1zM616 133h1v1h-1zM616 137h1v1h-1zM625 134h1v3h-1zM624 133h1v1h-1zM624 137h1v1h-1zM633 134h1v3h-1zM632 133h1v1h-1zM632 137h1v1h-1zM641 134h1v3h-1zM640 133h1v1h-1zM640 137h1v1h-1zM649 134h1v3h-1zM648 133h1v1h-1zM648 137h1v1h-1zM657 134h1v3h-1zM656 133h1v1h-1zM656 137h1v1h-1zM665 134h1v3h-1zM664 133h1v1h-1zM664 137h1v1h-1zM673 134h1v3h-1zM672 133h1v1h-1zM672 137h1v1h-1zM681 134h1v3h-1zM680 133h1v1h-1zM680 137h1v1h-1zM689 134h1v3h-1zM688 133h1v1h-1zM688 137h1v1h-1zM697 134h1v3h-1zM696 133h1v1h-1zM696 137h1v1h-1zM705 134h1v3h-1zM704 133h1v1h-1zM704 137h1v1h-1zM713 134h1v3h-1zM712 133h1v1h-1zM712 137h1v1h-1zM721 134h1v3h-1zM720 133h1v1h-1zM720 137h1v1h-1zM729 134h1v3h-1zM728 133h1v1h-1zM728 137h1v1h-1zM737 134h1v3h-1zM736 133h1v1h-1zM736 137h1v1h-1zM745 134h1v3h-1zM744 133h1v1h-1zM744 137h1v1h-1zM753 134h1v3h-1zM752 133h1v1h-1zM752 137h1v1h-1zM761 134h1v3h-1zM760 133h1v1h-1zM760 137h1v1h-1zM769 134h1v3h-1zM768 133h1v1h-1zM768 137h1v1h-1zM777 134h1v3h-1zM776 133h1v1h-1zM776 137h1v1h-1zM785 134h1v3h-1zM784 133h1v1h-1zM784 137h1v1h-1zM793 134h1v3h-1zM792 133h1v1h-1zM792 137h1v1h-1zM801 134h1v3h-1zM800 133h1v1h-1zM800 137h1v1h-1zM809 134h1v3h-1zM808 133h1v1h-1zM808 137h1v1h-1zM817 134h1v3h-1zM816 133h1v1h-1zM816 137h1v1h-1zM825 134h1v3h-1zM824 133h1v1h-1zM824 137h1v1h-1zM833 134h1v3h-1zM832 133h1v1h-1zM832 137h1v1h-1zM841 134h1v3h-1zM840 133h1v1h-1zM840 137h1v1h-1zM849 134h1v3h-1zM848 133h1v1h-1zM848 137h1v1h-1zM857 134h1v3h-1zM856 133h1v1h-1zM856 137h1v1h-1zM865 134h1v3h-1zM864 133h1v1h-1zM864 137h1v1h-1zM873 134h1v3h-1zM872 133h1v1h-1zM872 137h1v1h-1zM881 134h1v3h-1zM880 133h1v1h-1zM880 137h1v1h-1zM889 134h1v3h-1zM888 133h1v1h-1zM888 137h1v1h-1zM897 134h1v3h-1zM896 133h1v1h-1zM896 137h1v1h-1zM905 134h1v3h-1zM904 133h1v1h-1zM904 137h1v1h-1zM913 134h1v3h-1zM912 133h1v1h-1zM912 137h1v1h-1zM921 134h1v3h-1zM920 133h1v1h-1zM920 137h1v1h-1zM929 134h1v3h-1zM928 133h1v1h-1zM928 137h1v1h-1zM937 134h1v3h-1zM936 133h1v1h-1zM936 137h1v1h-1zM945 134h1v3h-1zM944 133h1v1h-1zM944 137h1v1h-1z" fill="#0c0c78"/>
<path d="M159 132h1v1h-1zM159 138h1v1h-1zM167 132h1v1h-1zM167 138h1v1h-1zM175 132h1v1h-1zM175 138h1v1h-1zM183 132h1v1h-1zM183 138h1v1h-1zM191 132h1v1h-1zM191 138h1v1h-1zM199 132h1v1h-1zM199 138h1v1h-1zM207 132h1v1h-1zM207 138h1v1h-1zM215 132h1v1h-1zM215 138h1v1h-1zM223 132h1v1h-1zM223 138h1v1h-1zM231 132h1v1h-1zM231 138h1v1h-1zM239 132h1v1h-1zM239 138h1v1h-1zM247 132h1v1h-1zM247 138h1v1h-1zM255 132h1v1h-1zM255 138h1v1h-1zM263 132h1v1h-1zM263 138h1v1h-1zM271 132h1v1h-1zM271 138h1v1h-1zM279 132h1v1h-1zM279 138h1v1h-1zM287 132h1v1h-1zM287 138h1v1h-1zM295 132h1v1h-1zM295 138h1v1h-1zM303 132h1v1h-1zM303 138h1v1h-1zM311 132h1v1h-1zM311 138h1v1h-1zM319 132h1v1h-1zM319 138h1v1h-1zM327 132h1v1h-1zM327 138h1v1h-1zM335 132h1v1h-1zM335 138h1v1h-1zM343 132h1v1h-1zM343 138h1v1h-1zM351 132h1v1h-1zM351 138h1v1h-1zM359 132h1v1h-1zM359 138h1v1h-1zM367 132h1v1h-1zM367 138h1v1h-1zM375 132h1v1h-1zM375 138h1v1h-1zM383 132h1v1h-1zM383 138h1v1h-1zM391 132h1v1h-1zM391 138h1v1h-1zM399 132h1v1h-1zM399 138h1v1h-1zM407 132h1v1h-1zM407 138h1v1h-1zM415 132h1v1h-1zM415 138h1v1h-1zM423 132h1v1h-1zM423 138h1v1h-1zM431 132h1v1h-1zM431 138h1v1h-1zM439 132h1v1h-1zM439 138h1v1h-1zM447 132h1v1h-1zM447 138h1v1h-1zM455 132h1v1h-1zM455 138h1v1h-1zM463 132h1v1h-1zM463 138h1v1h-1zM471 132h1v1h-1zM471 138h1v1h-1zM479 132h1v1h-1zM479 138h1v1h-1zM487 132h1v1h-1zM487 138h1v1h-1zM495 132h1v1h-1zM495 138h1v1h-1zM503 132h1v1h-1zM503 138h1v1h-1zM511 132h1v1h-1zM511 138h1v1h-1zM519 132h1v1h-1zM519 138h1v1h-1zM527 132h1v1h-1zM527 138h1v1h-1zM535 132h1v1h-1zM535 138h1v1h-1zM543 132h1v1h-1zM543 138h1v1h-1zM551 132h1v1h-1zM551 138h1v1h-1zM559 132h1v1h-1zM559 138h1v1h-1zM567 132h1v1h-1zM567 138h1v1h-1zM575 132h1v1h-1zM575 138h1v1h-1zM583 132h1v1h-1zM583 138h1v1h-1zM591 132h1v1h-1zM591 138h1v1h-1zM599 132h1v1h-1zM599 138h1v1h-1zM607 132h1v1h-1zM607 138h1v1h-1zM615 132h1v1h-1zM615 138h1v1h-1zM623 132h1v1h-1zM623 138h1v1h-1zM631 132h1v1h-1zM631 138h1v1h-1zM639 132h1v1h-1zM639 138h1v1h-1zM647 132h1v1h-1zM647 138h1v1h-1zM655 132h1v1h-1zM655 138h1v1h-1zM663 132h1v1h-1zM663 138h1v1h-1zM671 132h1v1h-1zM671 138h1v1h-1zM679 132h1v1h-1zM679 138h1v1h-1zM687 132h1v1h-1zM687 138h1v1h-1zM695 132h1v1h-1zM695 138h1v1h-1zM703 132h1v1h-1zM703 138h1v1h-1zM711 132h1v1h-1zM711 138h1v1h-1zM719 132h1v1h-1zM719 138h1v1h-1zM727 132h1v1h-1zM727 138h1v1h-1zM735 132h1v1h-1zM735 138h1v1h-1zM743 132h1v1h-1zM743 138h1v1h-1zM751 132h1v1h-1zM751 138h1v1h-1zM759 132h1v1h-1zM759 138h1v1h-1zM767 132h1v1h-1zM767 138h1v1h-1zM775 132h1v1h-1zM775 138h1v1h-1zM783 132h1v1h-1zM783 138h1v1h-1zM791 132h1v1h-1zM791 138h1v1h-1zM799 132h1v1h-1zM799 138h1v1h-1zM807 132h1v1h-1zM807 138h1v1h-1zM815 132h1v1h-1zM815 138h1v1h-1zM823 132h1v1h-1zM823 138h1v1h-1zM831 132h1v1h-1zM831 138h1v1h-1zM839 132h1v1h-1zM839 138h1v1h-1zM847 132h1v1h-1zM847 138h1v1h-1zM855 132h1v1h-1zM855 138h1v1h-1zM863 132h1v1h-1zM863 138h1v1h-1zM871 132h1v1h-1zM871 138h1v1h-1zM879 132h1v1h-1zM879 138h1v1h-1zM887 132h1v1h-1zM887 138h1v1h-1zM895 132h1v1h-1zM895 138h1v1h-1zM903 132h1v1h-1zM903 138h1v1h-1zM911 132h1v1h-1zM911 138h1v1h-1zM919 132h1v1h-1zM919 138h1v1h-1zM927 132h1v1h-1zM927 138h1v1h-1zM935 132h1v1h-1zM935 138h1v1h-1zM943 132h1v1h-1zM943 138h1v1h-1z" fill="#0c0c78" fill-opacity="0.55"/>
<rect x="157" y="151" width="792" height="1" fill="#1780b4" />
<path d="M161 150h1v3h-1zM160 149h1v1h-1zM160 153h1v1h-1zM169 150h1v3h-1zM168 149h1v1h-1zM168 153h1v1h-1zM177 150h1v3h-1zM176 149h1v1h-1zM176 153h1v1h-1zM185 150h1v3h-1zM184 149h1v1h-1zM184 153h1v1h-1zM193 150h1v3h-1zM192 149h1v1h-1zM192 153h1v1h-1zM201 150h1v3h-1zM200 149h1v1h-1zM200 153h1v1h-1zM209 150h1v3h-1zM208 149h1v1h-1zM208 153h1v1h-1zM217 150h1v3h-1zM216 149h1v1h-1zM216 153h1v1h-1zM225 150h1v3h-1zM224 149h1v1h-1zM224 153h1v1h-1zM233 150h1v3h-1zM232 149h1v1h-1zM232 153h1v1h-1zM241 150h1v3h-1zM240 149h1v1h-1zM240 153h1v1h-1zM249 150h1v3h-1zM248 149h1v1h-1zM248 153h1v1h-1zM257 150h1v3h-1zM256 149h1v1h-1zM256 153h1v1h-1zM265 150h1v3h-1zM264 149h1v1h-1zM264 153h1v1h-1zM273 150h1v3h-1zM272 149h1v1h-1zM272 153h1v1h-1zM281 150h1v3h-1zM280 149h1v1h-1zM280 153h1v1h-1zM289 150h1v3h-1zM288 149h1v1h-1zM288 153h1v1h-1zM297 150h1v3h-1zM296 149h1v1h-1zM296 153h1v1h-1zM305 150h1v3h-1zM304 149h1v1h-1zM304 153h1v1h-1zM313 150h1v3h-1zM312 149h1v1h-1zM312 153h1v1h-1zM321 150h1v3h-1zM320 149h1v1h-1zM320 153h1v1h-1zM329 150h1v3h-1zM328 149h1v1h-1zM328 153h1v1h-1zM337 150h1v3h-1zM336 149h1v1h-1zM336 153h1v1h-1zM345 150h1v3h-1zM344 149h1v1h-1zM344 153h1v1h-1zM353 150h1v3h-1zM352 149h1v1h-1zM352 153h1v1h-1zM361 150h1v3h-1zM360 149h1v1h-1zM360 153h1v1h-1zM369 150h1v3h-1zM368 149h1v1h-1zM368 153h1v1h-1zM377 150h1v3h-1zM376 149h1v1h-1zM376 153h1v1h-1zM385 150h1v3h-1zM384 149h1v1h-1zM384 153h1v1h-1zM393 150h1v3h-1zM392 149h1v1h-1zM392 153h1v1h-1zM401 150h1v3h-1zM400 149h1v1h-1zM400 153h1v1h-1zM409 150h1v3h-1zM408 149h1v1h-1zM408 153h1v1h-1zM417 150h1v3h-1zM416 149h1v1h-1zM416 153h1v1h-1zM425 150h1v3h-1zM424 149h1v1h-1zM424 153h1v1h-1zM433 150h1v3h-1zM432 149h1v1h-1zM432 153h1v1h-1zM441 150h1v3h-1zM440 149h1v1h-1zM440 153h1v1h-1zM449 150h1v3h-1zM448 149h1v1h-1zM448 153h1v1h-1zM457 150h1v3h-1zM456 149h1v1h-1zM456 153h1v1h-1zM465 150h1v3h-1zM464 149h1v1h-1zM464 153h1v1h-1zM473 150h1v3h-1zM472 149h1v1h-1zM472 153h1v1h-1zM481 150h1v3h-1zM480 149h1v1h-1zM480 153h1v1h-1zM489 150h1v3h-1zM488 149h1v1h-1zM488 153h1v1h-1zM497 150h1v3h-1zM496 149h1v1h-1zM496 153h1v1h-1zM505 150h1v3h-1zM504 149h1v1h-1zM504 153h1v1h-1zM513 150h1v3h-1zM512 149h1v1h-1zM512 153h1v1h-1zM521 150h1v3h-1zM520 149h1v1h-1zM520 153h1v1h-1zM529 150h1v3h-1zM528 149h1v1h-1zM528 153h1v1h-1zM537 150h1v3h-1zM536 149h1v1h-1zM536 153h1v1h-1zM545 150h1v3h-1zM544 149h1v1h-1zM544 153h1v1h-1zM553 150h1v3h-1zM552 149h1v1h-1zM552 153h1v1h-1zM561 150h1v3h-1zM560 149h1v1h-1zM560 153h1v1h-1zM569 150h1v3h-1zM568 149h1v1h-1zM568 153h1v1h-1zM577 150h1v3h-1zM576 149h1v1h-1zM576 153h1v1h-1zM585 150h1v3h-1zM584 149h1v1h-1zM584 153h1v1h-1zM593 150h1v3h-1zM592 149h1v1h-1zM592 153h1v1h-1zM601 150h1v3h-1zM600 149h1v1h-1zM600 153h1v1h-1zM609 150h1v3h-1zM608 149h1v1h-1zM608 153h1v1h-1zM617 150h1v3h-1zM616 149h1v1h-1zM616 153h1v1h-1zM625 150h1v3h-1zM624 149h1v1h-1zM624 153h1v1h-1zM633 150h1v3h-1zM632 149h1v1h-1zM632 153h1v1h-1zM641 150h1v3h-1zM640 149h1v1h-1zM640 153h1v1h-1zM649 150h1v3h-1zM648 149h1v1h-1zM648 153h1v1h-1zM657 150h1v3h-1zM656 149h1v1h-1zM656 153h1v1h-1zM665 150h1v3h-1zM664 149h1v1h-1zM664 153h1v1h-1zM673 150h1v3h-1zM672 149h1v1h-1zM672 153h1v1h-1zM681 150h1v3h-1zM680 149h1v1h-1zM680 153h1v1h-1zM689 150h1v3h-1zM688 149h1v1h-1zM688 153h1v1h-1zM697 150h1v3h-1zM696 149h1v1h-1zM696 153h1v1h-1zM705 150h1v3h-1zM704 149h1v1h-1zM704 153h1v1h-1zM713 150h1v3h-1zM712 149h1v1h-1zM712 153h1v1h-1zM721 150h1v3h-1zM720 149h1v1h-1zM720 153h1v1h-1zM729 150h1v3h-1zM728 149h1v1h-1zM728 153h1v1h-1zM737 150h1v3h-1zM736 149h1v1h-1zM736 153h1v1h-1zM745 150h1v3h-1zM744 149h1v1h-1zM744 153h1v1h-1zM753 150h1v3h-1zM752 149h1v1h-1zM752 153h1v1h-1zM761 150h1v3h-1zM760 149h1v1h-1zM760 153h1v1h-1zM769 150h1v3h-1zM768 149h1v1h-1zM768 153h1v1h-1zM777 150h1v3h-1zM776 149h1v1h-1zM776 153h1v1h-1zM785 150h1v3h-1zM784 149h1v1h-1zM784 153h1v1h-1zM793 150h1v3h-1zM792 149h1v1h-1zM792 153h1v1h-1zM801 150h1v3h-1zM800 149h1v1h-1zM800 153h1v1h-1zM809 150h1v3h-1zM808 149h1v1h-1zM808 153h1v1h-1zM817 150h1v3h-1zM816 149h1v1h-1zM816 153h1v1h-1zM825 150h1v3h-1zM824 149h1v1h-1zM824 153h1v1h-1zM833 150h1v3h-1zM832 149h1v1h-1zM832 153h1v1h-1zM841 150h1v3h-1zM840 149h1v1h-1zM840 153h1v1h-1zM849 150h1v3h-1zM848 149h1v1h-1zM848 153h1v1h-1zM857 150h1v3h-1zM856 149h1v1h-1zM856 153h1v1h-1zM865 150h1v3h-1zM864 149h1v1h-1zM864 153h1v1h-1zM873 150h1v3h-1zM872 149h1v1h-1zM872 153h1v1h-1zM881 150h1v3h-1zM880 149h1v1h-1zM880 153h1v1h-1zM889 150h1v3h-1zM888 149h1v1h-1zM888 153h1v1h-1zM897 150h1v3h-1zM896 149h1v1h-1zM896 153h1v1h-1zM905 150h1v3h-1zM904 149h1v1h-1zM904 153h1v1h-1zM913 150h1v3h-1zM912 149h1v1h-1zM912 153h1v1h-1zM921 150h1v3h-1zM920 149h1v1h-1zM920 153h1v1h-1zM929 150h1v3h-1zM928 149h1v1h-1zM928 153h1v1h-1zM937 150h1v3h-1zM936 149h1v1h-1zM936 153h1v1h-1zM945 150h1v3h-1zM944 149h1v1h-1zM944 153h1v1h-1z" fill="#1780b4"/>
<path d="M159 148h1v1h-1zM159 154h1v1h-1zM167 148h1v1h-1zM167 154h1v1h-1zM175 148h1v1h-1zM175 154h1v1h-1zM183 148h1v1h-1zM183 154h1v1h-1zM191 148h1v1h-1zM191 154h1v1h-1zM199 148h1v1h-1zM199 154h1v1h-1zM207 148h1v1h-1zM207 154h1v1h-1zM215 148h1v1h-1zM215 154h1v1h-1zM223 148h1v1h-1zM223 154h1v1h-1zM231 148h1v1h-1zM231 154h1v1h-1zM239 148h1v1h-1zM239 154h1v1h-1zM247 148h1v1h-1zM247 154h1v1h-1zM255 148h1v1h-1zM255 154h1v1h-1zM263 148h1v1h-1zM263 154h1v1h-1zM271 148h1v1h-1zM271 154h1v1h-1zM279 148h1v1h-1zM279 154h1v1h-1zM287 148h1v1h-1zM287 154h1v1h-1zM295 148h1v1h-1zM295 154h1v1h-1zM303 148h1v1h-1zM303 154h1v1h-1zM311 148h1v1h-1zM311 154h1v1h-1zM319 148h1v1h-1zM319 154h1v1h-1zM327 148h1v1h-1zM327 154h1v1h-1zM335 148h1v1h-1zM335 154h1v1h-1zM343 148h1v1h-1zM343 154h1v1h-1zM351 148h1v1h-1zM351 154h1v1h-1zM359 148h1v1h-1zM359 154h1v1h-1zM367 148h1v1h-1zM367 154h1v1h-1zM375 148h1v1h-1zM375 154h1v1h-1zM383 148h1v1h-1zM383 154h1v1h-1zM391 148h1v1h-1zM391 154h1v1h-1zM399 148h1v1h-1zM399 154h1v1h-1zM407 148h1v1h-1zM407 154h1v1h-1zM415 148h1v1h-1zM415 154h1v1h-1zM423 148h1v1h-1zM423 154h1v1h-1zM431 148h1v1h-1zM431 154h1v1h-1zM439 148h1v1h-1zM439 154h1v1h-1zM447 148h1v1h-1zM447 154h1v1h-1zM455 148h1v1h-1zM455 154h1v1h-1zM463 148h1v1h-1zM463 154h1v1h-1zM471 148h1v1h-1zM471 154h1v1h-1zM479 148h1v1h-1zM479 154h1v1h-1zM487 148h1v1h-1zM487 154h1v1h-1zM495 148h1v1h-1zM495 154h1v1h-1zM503 148h1v1h-1zM503 154h1v1h-1zM511 148h1v1h-1zM511 154h1v1h-1zM519 148h1v1h-1zM519 154h1v1h-1zM527 148h1v1h-1zM527 154h1v1h-1zM535 148h1v1h-1zM535 154h1v1h-1zM543 148h1v1h-1zM543 154h1v1h-1zM551 148h1v1h-1zM551 154h1v1h-1zM559 148h1v1h-1zM559 154h1v1h-1zM567 148h1v1h-1zM567 154h1v1h-1zM575 148h1v1h-1zM575 154h1v1h-1zM583 148h1v1h-1zM583 154h1v1h-1zM591 148h1v1h-1zM591 154h1v1h-1zM599 148h1v1h-1zM599 154h1v1h-1zM607 148h1v1h-1zM607 154h1v1h-1zM615 148h1v1h-1zM615 154h1v1h-1zM623 148h1v1h-1zM623 154h1v1h-1zM631 148h1v1h-1zM631 154h1v1h-1zM639 148h1v1h-1zM639 154h1v1h-1zM647 148h1v1h-1zM647 154h1v1h-1zM655 148h1v1h-1zM655 154h1v1h-1zM663 148h1v1h-1zM663 154h1v1h-1zM671 148h1v1h-1zM671 154h1v1h-1zM679 148h1v1h-1zM679 154h1v1h-1zM687 148h1v1h-1zM687 154h1v1h-1zM695 148h1v1h-1zM695 154h1v1h-1zM703 148h1v1h-1zM703 154h1v1h-1zM711 148h1v1h-1zM711 154h1v1h-1zM719 148h1v1h-1zM719 154h1v1h-1zM727 148h1v1h-1zM727 154h1v1h-1zM735 148h1v1h-1zM735 154h1v1h-1zM743 148h1v1h-1zM743 154h1v1h-1zM751 148h1v1h-1zM751 154h1v1h-1zM759 148h1v1h-1zM759 154h1v1h-1zM767 148h1v1h-1zM767 154h1v1h-1zM775 148h1v1h-1zM775 154h1v1h-1zM783 148h1v1h-1zM783 154h1v1h-1zM791 148h1v1h-1zM791 154h1v1h-1zM799 148h1v1h-1zM799 154h1v1h-1zM807 148h1v1h-1zM807 154h1v1h-1zM815 148h1v1h-1zM815 154h1v1h-1zM823 148h1v1h-1zM823 154h1v1h-1zM831 148h1v1h-1zM831 154h1v1h-1zM839 148h1v1h-1zM839 154h1v1h-1zM847 148h1v1h-1zM847 154h1v1h-1zM855 148h1v1h-1zM855 154h1v1h-1zM863 148h1v1h-1zM863 154h1v1h-1zM871 148h1v1h-1zM871 154h1v1h-1zM879 148h1v1h-1zM879 154h1v1h-1zM887 148h1v1h-1zM887 154h1v1h-1zM895 148h1v1h-1zM895 154h1v1h-1zM903 148h1v1h-1zM903 154h1v1h-1zM911 148h1v1h-1zM911 154h1v1h-1zM919 148h1v1h-1zM919 154h1v1h-1zM927 148h1v1h-1zM927 154h1v1h-1zM935 148h1v1h-1zM935 154h1v1h-1zM943 148h1v1h-1zM943 154h1v1h-1z" fill="#1780b4" fill-opacity="0.55"/>
<rect x="157" y="167" width="792" height="1" fill="#0c0c78" />
<path d="M161 166h1v3h-1zM160 165h1v1h-1zM160 169h1v1h-1zM169 166h1v3h-1zM168 165h1v1h-1zM168 169h1v1h-1zM177 166h1v3h-1zM176 165h1v1h-1zM176 169h1v1h-1zM185 166h1v3h-1zM184 165h1v1h-1zM184 169h1v1h-1zM193 166h1v3h-1zM192 165h1v1h-1zM192 169h1v1h-1zM201 166h1v3h-1zM200 165h1v1h-1zM200 169h1v1h-1zM209 166h1v3h-1zM208 165h1v1h-1zM208 169h1v1h-1zM217 166h1v3h-1zM216 165h1v1h-1zM216 169h1v1h-1zM225 166h1v3h-1zM224 165h1v1h-1zM224 169h1v1h-1zM233 166h1v3h-1zM232 165h1v1h-1zM232 169h1v1h-1zM241 166h1v3h-1zM240 165h1v1h-1zM240 169h1v1h-1zM249 166h1v3h-1zM248 165h1v1h-1zM248 169h1v1h-1zM257 166h1v3h-1zM256 165h1v1h-1zM256 169h1v1h-1zM265 166h1v3h-1zM264 165h1v1h-1zM264 169h1v1h-1zM273 166h1v3h-1zM272 165h1v1h-1zM272 169h1v1h-1zM281 166h1v3h-1zM280 165h1v1h-1zM280 169h1v1h-1zM289 166h1v3h-1zM288 165h1v1h-1zM288 169h1v1h-1zM297 166h1v3h-1zM296 165h1v1h-1zM296 169h1v1h-1zM305 166h1v3h-1zM304 165h1v1h-1zM304 169h1v1h-1zM313 166h1v3h-1zM312 165h1v1h-1zM312 169h1v1h-1zM321 166h1v3h-1zM320 165h1v1h-1zM320 169h1v1h-1zM329 166h1v3h-1zM328 165h1v1h-1zM328 169h1v1h-1zM337 166h1v3h-1zM336 165h1v1h-1zM336 169h1v1h-1zM345 166h1v3h-1zM344 165h1v1h-1zM344 169h1v1h-1zM353 166h1v3h-1zM352 165h1v1h-1zM352 169h1v1h-1zM361 166h1v3h-1zM360 165h1v1h-1zM360 169h1v1h-1zM369 166h1v3h-1zM368 165h1v1h-1zM368 169h1v1h-1zM377 166h1v3h-1zM376 165h1v1h-1zM376 169h1v1h-1zM385 166h1v3h-1zM384 165h1v1h-1zM384 169h1v1h-1zM393 166h1v3h-1zM392 165h1v1h-1zM392 169h1v1h-1zM401 166h1v3h-1zM400 165h1v1h-1zM400 169h1v1h-1zM409 166h1v3h-1zM408 165h1v1h-1zM408 169h1v1h-1zM417 166h1v3h-1zM416 165h1v1h-1zM416 169h1v1h-1zM425 166h1v3h-1zM424 165h1v1h-1zM424 169h1v1h-1zM433 166h1v3h-1zM432 165h1v1h-1zM432 169h1v1h-1zM441 166h1v3h-1zM440 165h1v1h-1zM440 169h1v1h-1zM449 166h1v3h-1zM448 165h1v1h-1zM448 169h1v1h-1zM457 166h1v3h-1zM456 165h1v1h-1zM456 169h1v1h-1zM465 166h1v3h-1zM464 165h1v1h-1zM464 169h1v1h-1zM473 166h1v3h-1zM472 165h1v1h-1zM472 169h1v1h-1zM481 166h1v3h-1zM480 165h1v1h-1zM480 169h1v1h-1zM489 166h1v3h-1zM488 165h1v1h-1zM488 169h1v1h-1zM497 166h1v3h-1zM496 165h1v1h-1zM496 169h1v1h-1zM505 166h1v3h-1zM504 165h1v1h-1zM504 169h1v1h-1zM513 166h1v3h-1zM512 165h1v1h-1zM512 169h1v1h-1zM521 166h1v3h-1zM520 165h1v1h-1zM520 169h1v1h-1zM529 166h1v3h-1zM528 165h1v1h-1zM528 169h1v1h-1zM537 166h1v3h-1zM536 165h1v1h-1zM536 169h1v1h-1zM545 166h1v3h-1zM544 165h1v1h-1zM544 169h1v1h-1zM553 166h1v3h-1zM552 165h1v1h-1zM552 169h1v1h-1zM561 166h1v3h-1zM560 165h1v1h-1zM560 169h1v1h-1zM569 166h1v3h-1zM568 165h1v1h-1zM568 169h1v1h-1zM577 166h1v3h-1zM576 165h1v1h-1zM576 169h1v1h-1zM585 166h1v3h-1zM584 165h1v1h-1zM584 169h1v1h-1zM593 166h1v3h-1zM592 165h1v1h-1zM592 169h1v1h-1zM601 166h1v3h-1zM600 165h1v1h-1zM600 169h1v1h-1zM609 166h1v3h-1zM608 165h1v1h-1zM608 169h1v1h-1zM617 166h1v3h-1zM616 165h1v1h-1zM616 169h1v1h-1zM625 166h1v3h-1zM624 165h1v1h-1zM624 169h1v1h-1zM633 166h1v3h-1zM632 165h1v1h-1zM632 169h1v1h-1zM641 166h1v3h-1zM640 165h1v1h-1zM640 169h1v1h-1zM649 166h1v3h-1zM648 165h1v1h-1zM648 169h1v1h-1zM657 166h1v3h-1zM656 165h1v1h-1zM656 169h1v1h-1zM665 166h1v3h-1zM664 165h1v1h-1zM664 169h1v1h-1zM673 166h1v3h-1zM672 165h1v1h-1zM672 169h1v1h-1zM681 166h1v3h-1zM680 165h1v1h-1zM680 169h1v1h-1zM689 166h1v3h-1zM688 165h1v1h-1zM688 169h1v1h-1zM697 166h1v3h-1zM696 165h1v1h-1zM696 169h1v1h-1zM705 166h1v3h-1zM704 165h1v1h-1zM704 169h1v1h-1zM713 166h1v3h-1zM712 165h1v1h-1zM712 169h1v1h-1zM721 166h1v3h-1zM720 165h1v1h-1zM720 169h1v1h-1zM729 166h1v3h-1zM728 165h1v1h-1zM728 169h1v1h-1zM737 166h1v3h-1zM736 165h1v1h-1zM736 169h1v1h-1zM745 166h1v3h-1zM744 165h1v1h-1zM744 169h1v1h-1zM753 166h1v3h-1zM752 165h1v1h-1zM752 169h1v1h-1zM761 166h1v3h-1zM760 165h1v1h-1zM760 169h1v1h-1zM769 166h1v3h-1zM768 165h1v1h-1zM768 169h1v1h-1zM777 166h1v3h-1zM776 165h1v1h-1zM776 169h1v1h-1zM785 166h1v3h-1zM784 165h1v1h-1zM784 169h1v1h-1zM793 166h1v3h-1zM792 165h1v1h-1zM792 169h1v1h-1zM801 166h1v3h-1zM800 165h1v1h-1zM800 169h1v1h-1zM809 166h1v3h-1zM808 165h1v1h-1zM808 169h1v1h-1zM817 166h1v3h-1zM816 165h1v1h-1zM816 169h1v1h-1zM825 166h1v3h-1zM824 165h1v1h-1zM824 169h1v1h-1zM833 166h1v3h-1zM832 165h1v1h-1zM832 169h1v1h-1zM841 166h1v3h-1zM840 165h1v1h-1zM840 169h1v1h-1zM849 166h1v3h-1zM848 165h1v1h-1zM848 169h1v1h-1zM857 166h1v3h-1zM856 165h1v1h-1zM856 169h1v1h-1zM865 166h1v3h-1zM864 165h1v1h-1zM864 169h1v1h-1zM873 166h1v3h-1zM872 165h1v1h-1zM872 169h1v1h-1zM881 166h1v3h-1zM880 165h1v1h-1zM880 169h1v1h-1zM889 166h1v3h-1zM888 165h1v1h-1zM888 169h1v1h-1zM897 166h1v3h-1zM896 165h1v1h-1zM896 169h1v1h-1zM905 166h1v3h-1zM904 165h1v1h-1zM904 169h1v1h-1zM913 166h1v3h-1zM912 165h1v1h-1zM912 169h1v1h-1zM921 166h1v3h-1zM920 165h1v1h-1zM920 169h1v1h-1zM929 166h1v3h-1zM928 165h1v1h-1zM928 169h1v1h-1zM937 166h1v3h-1zM936 165h1v1h-1zM936 169h1v1h-1zM945 166h1v3h-1zM944 165h1v1h-1zM944 169h1v1h-1z" fill="#0c0c78"/>
<path d="M159 164h1v1h-1zM159 170h1v1h-1zM167 164h1v1h-1zM167 170h1v1h-1zM175 164h1v1h-1zM175 170h1v1h-1zM183 164h1v1h-1zM183 170h1v1h-1zM191 164h1v1h-1zM191 170h1v1h-1zM199 164h1v1h-1zM199 170h1v1h-1zM207 164h1v1h-1zM207 170h1v1h-1zM215 164h1v1h-1zM215 170h1v1h-1zM223 164h1v1h-1zM223 170h1v1h-1zM231 164h1v1h-1zM231 170h1v1h-1zM239 164h1v1h-1zM239 170h1v1h-1zM247 164h1v1h-1zM247 170h1v1h-1zM255 164h1v1h-1zM255 170h1v1h-1zM263 164h1v1h-1zM263 170h1v1h-1zM271 164h1v1h-1zM271 170h1v1h-1zM279 164h1v1h-1zM279 170h1v1h-1zM287 164h1v1h-1zM287 170h1v1h-1zM295 164h1v1h-1zM295 170h1v1h-1zM303 164h1v1h-1zM303 170h1v1h-1zM311 164h1v1h-1zM311 170h1v1h-1zM319 164h1v1h-1zM319 170h1v1h-1zM327 164h1v1h-1zM327 170h1v1h-1zM335 164h1v1h-1zM335 170h1v1h-1zM343 164h1v1h-1zM343 170h1v1h-1zM351 164h1v1h-1zM351 170h1v1h-1zM359 164h1v1h-1zM359 170h1v1h-1zM367 164h1v1h-1zM367 170h1v1h-1zM375 164h1v1h-1zM375 170h1v1h-1zM383 164h1v1h-1zM383 170h1v1h-1zM391 164h1v1h-1zM391 170h1v1h-1zM399 164h1v1h-1zM399 170h1v1h-1zM407 164h1v1h-1zM407 170h1v1h-1zM415 164h1v1h-1zM415 170h1v1h-1zM423 164h1v1h-1zM423 170h1v1h-1zM431 164h1v1h-1zM431 170h1v1h-1zM439 164h1v1h-1zM439 170h1v1h-1zM447 164h1v1h-1zM447 170h1v1h-1zM455 164h1v1h-1zM455 170h1v1h-1zM463 164h1v1h-1zM463 170h1v1h-1zM471 164h1v1h-1zM471 170h1v1h-1zM479 164h1v1h-1zM479 170h1v1h-1zM487 164h1v1h-1zM487 170h1v1h-1zM495 164h1v1h-1zM495 170h1v1h-1zM503 164h1v1h-1zM503 170h1v1h-1zM511 164h1v1h-1zM511 170h1v1h-1zM519 164h1v1h-1zM519 170h1v1h-1zM527 164h1v1h-1zM527 170h1v1h-1zM535 164h1v1h-1zM535 170h1v1h-1zM543 164h1v1h-1zM543 170h1v1h-1zM551 164h1v1h-1zM551 170h1v1h-1zM559 164h1v1h-1zM559 170h1v1h-1zM567 164h1v1h-1zM567 170h1v1h-1zM575 164h1v1h-1zM575 170h1v1h-1zM583 164h1v1h-1zM583 170h1v1h-1zM591 164h1v1h-1zM591 170h1v1h-1zM599 164h1v1h-1zM599 170h1v1h-1zM607 164h1v1h-1zM607 170h1v1h-1zM615 164h1v1h-1zM615 170h1v1h-1zM623 164h1v1h-1zM623 170h1v1h-1zM631 164h1v1h-1zM631 170h1v1h-1zM639 164h1v1h-1zM639 170h1v1h-1zM647 164h1v1h-1zM647 170h1v1h-1zM655 164h1v1h-1zM655 170h1v1h-1zM663 164h1v1h-1zM663 170h1v1h-1zM671 164h1v1h-1zM671 170h1v1h-1zM679 164h1v1h-1zM679 170h1v1h-1zM687 164h1v1h-1zM687 170h1v1h-1zM695 164h1v1h-1zM695 170h1v1h-1zM703 164h1v1h-1zM703 170h1v1h-1zM711 164h1v1h-1zM711 170h1v1h-1zM719 164h1v1h-1zM719 170h1v1h-1zM727 164h1v1h-1zM727 170h1v1h-1zM735 164h1v1h-1zM735 170h1v1h-1zM743 164h1v1h-1zM743 170h1v1h-1zM751 164h1v1h-1zM751 170h1v1h-1zM759 164h1v1h-1zM759 170h1v1h-1zM767 164h1v1h-1zM767 170h1v1h-1zM775 164h1v1h-1zM775 170h1v1h-1zM783 164h1v1h-1zM783 170h1v1h-1zM791 164h1v1h-1zM791 170h1v1h-1zM799 164h1v1h-1zM799 170h1v1h-1zM807 164h1v1h-1zM807 170h1v1h-1zM815 164h1v1h-1zM815 170h1v1h-1zM823 164h1v1h-1zM823 170h1v1h-1zM831 164h1v1h-1zM831 170h1v1h-1zM839 164h1v1h-1zM839 170h1v1h-1zM847 164h1v1h-1zM847 170h1v1h-1zM855 164h1v1h-1zM855 170h1v1h-1zM863 164h1v1h-1zM863 170h1v1h-1zM871 164h1v1h-1zM871 170h1v1h-1zM879 164h1v1h-1zM879 170h1v1h-1zM887 164h1v1h-1zM887 170h1v1h-1zM895 164h1v1h-1zM895 170h1v1h-1zM903 164h1v1h-1zM903 170h1v1h-1zM911 164h1v1h-1zM911 170h1v1h-1zM919 164h1v1h-1zM919 170h1v1h-1zM927 164h1v1h-1zM927 170h1v1h-1zM935 164h1v1h-1zM935 170h1v1h-1zM943 164h1v1h-1zM943 170h1v1h-1z" fill="#0c0c78" fill-opacity="0.55"/>
<rect x="157" y="198" width="792" height="1" fill="#0c0c78" />
<rect x="157" y="229" width="792" height="1" fill="#000" />
<rect x="156" y="269" width="793" height="15" fill="#004c00" />
<rect x="156.5" y="332.5" width="377" height="61" fill="#fff" stroke="#f0f0f0" stroke-width="1"/>
<rect x="156" y="354" width="5" height="38" fill="#ffa54f" />
<rect x="163" y="358" width="5" height="34" fill="#ee9a00" />
<rect x="170" y="379" width="5" height="13" fill="#8fbc8f" />
<rect x="177" y="348" width="5" height="44" fill="#8b1c62" />
<rect x="184" y="368" width="5" height="24" fill="#ee6a50" />
<rect x="191" y="356" width="5" height="36" fill="#ff0000" />
<rect x="198" y="372" width="5" height="20" fill="#cdb79e" />
<rect x="205" y="358" width="5" height="34" fill="#eeee00" />
<rect x="212" y="353" width="5" height="39" fill="#eeee00" />
<rect x="219" y="357" width="5" height="35" fill="#eeee00" />
<rect x="226" y="366" width="5" height="26" fill="#eeee00" />
<rect x="233" y="367" width="5" height="25" fill="#eeee00" />
<rect x="240" y="353" width="5" height="39" fill="#eeee00" />
<rect x="247" y="352" width="5" height="40" fill="#eeee00" />
<rect x="254" y="361" width="5" height="31" fill="#eeee00" />
<rect x="261" y="355" width="5" height="37" fill="#eeee00" />
<rect x="268" y="355" width="5" height="37" fill="#eeee00" />
<rect x="275" y="357" width="5" height="35" fill="#eeee00" />
<rect x="282" y="365" width="5" height="27" fill="#eeee00" />
<rect x="289" y="361" width="5" height="31" fill="#eeee00" />
<rect x="296" y="363" width="5" height="29" fill="#00cdcd" />
<rect x="303" y="386" width="5" height="6" fill="#ee82ee" />
<rect x="310" y="382" width="5" height="10" fill="#9ac0cd" />
<rect x="317" y="355" width="5" height="37" fill="#eed5d2" />
<rect x="324" y="349" width="5" height="43" fill="#eed5d2" />
<rect x="331" y="368" width="5" height="24" fill="#cdb79e" />
<rect x="338" y="376" width="5" height="16" fill="#eec591" />
<rect x="345" y="378" width="5" height="14" fill="#8b7355" />
<rect x="352" y="379" width="5" height="13" fill="#8b7355" />
<rect x="359" y="381" width="5" height="11" fill="#cdaa7d" />
<rect x="366" y="349" width="5" height="43" fill="#eed5d2" />
<rect x="373" y="358" width="5" height="34" fill="#b452cd" />
<rect x="380" y="386" width="5" height="6" fill="#7a378b" />
<rect x="387" y="376" width="5" height="16" fill="#cdb79e" />
<rect x="394" y="362" width="5" height="30" fill="#cdb79e" />
<rect x="401" y="384" width="5" height="8" fill="#cdb79e" />
<rect x="408" y="366" width="5" height="26" fill="#9acd32" />
<rect x="415" y="363" width="5" height="29" fill="#cdb79e" />
<rect x="422" y="387" width="5" height="5" fill="#7777ff" />
<rect x="429" y="372" width="5" height="20" fill="#ffd700" />
<rect x="436" y="371" width="5" height="21" fill="#ffb6c1" />
<rect x="443" y="376" width="5" height="16" fill="#cd9b1d" />
<rect x="450" y="358" width="5" height="34" fill="#b4eeb4" />
<rect x="457" y="355" width="5" height="37" fill="#d9d9d9" />
<rect x="464" y="378" width="5" height="14" fill="#3a5fcd" />
<rect x="471" y="376" width="5" height="16" fill="#1e90ff" />
<rect x="478" y="377" width="5" height="15" fill="#cdb79e" />
<rect x="485" y="383" width="5" height="9" fill="#cdb79e" />
<rect x="492" y="375" width="5" height="17" fill="#ffd39b" />
<rect x="499" y="371" width="5" height="21" fill="#a6a6a6" />
<rect x="506" y="332" width="5" height="60" fill="#008b45" />
<rect x="513" y="347" width="5" height="45" fill="#eed5d2" />
<rect x="520" y="367" width="5" height="25" fill="#eed5d2" />
<rect x="527" y="390" width="5" height="2" fill="#ff00ff" />
<rect x="156" y="393" width="793" height="2" fill="#000080" />
<rect x="156" y="441" width="99" height="1" fill="#406068" />
<rect x="255" y="441" width="694" height="1" fill="#ffd07a" />
<rect x="158" y="481" width="36" height="1" fill="#b4f0b4" />
<rect x="172" y="481" width="6" height="3" fill="#00e000" />
<path d="M207.2 483.6 L212.7 483.3 C218.7 482.2 222.7 481.3 226.7 481.3 C230.7 481.3 234.7 482.4 239.7 483.3 L245.2 483.6" stroke="#ff0000" stroke-width="1.35" fill="none" shape-rendering="geometricPrecision"/>
<rect x="256" y="481" width="36" height="1" fill="#b4f0b4" />
<rect x="272" y="481" width="6" height="3" fill="#00e000" />
<path d="M308.0 487 C315.0 483.8 341.0 483.8 348.0 485.2 M308.0 487 C315.0 490 339.0 490 345.0 489" stroke="#0000ff" stroke-width="1.3" fill="none" shape-rendering="geometricPrecision"/>
<rect x="330" y="487" width="14" height="1" fill="#0000ff" />
<rect x="344" y="486" width="5" height="3.5" fill="#0000ff" />
<rect x="306" y="490" width="36" height="1" fill="#b4f0b4" />
<rect x="321" y="490" width="6" height="2" fill="#00e000" />
<rect x="356" y="483" width="36" height="1" fill="#e2f6e2" />
<rect x="372" y="483" width="6" height="1" fill="#00e000" />
<rect x="406" y="483" width="37" height="1" fill="#f4a8a8" />
<rect x="456" y="483" width="36" height="1" fill="#e2f6e2" />
<rect x="470" y="483" width="6" height="1" fill="#00e000" />
<rect x="505" y="483" width="36" height="1" fill="#e2f6e2" />
<rect x="520" y="483" width="6" height="1" fill="#00e000" />
<rect x="554" y="483" width="36" height="1" fill="#e2f6e2" />
<rect x="570" y="483" width="6" height="1" fill="#00e000" />
<path d="M604.5 489.3 L620.0 484.6 L628.0 484.6 L643.0 489.3" stroke="#ff0000" stroke-width="1.9" fill="none" shape-rendering="geometricPrecision"/>
<rect x="615" y="487" width="18" height="1" fill="#ffc0c0" />
<rect x="604" y="490" width="36" height="1" fill="#b4f0b4" />
<rect x="619" y="490" width="6" height="2" fill="#00e000" />
<rect x="654" y="483" width="36" height="1" fill="#e2f6e2" />
<rect x="668" y="483" width="6" height="1" fill="#00e000" />
<rect x="703" y="483" width="36" height="1" fill="#e2f6e2" />
<rect x="718" y="483" width="6" height="1" fill="#00e000" />
<rect x="752" y="483" width="36" height="1" fill="#e2f6e2" />
<rect x="768" y="483" width="6" height="1" fill="#00e000" />
<rect x="802" y="483" width="36" height="1" fill="#e2f6e2" />
<rect x="817" y="483" width="6" height="1" fill="#00e000" />
<rect x="852" y="483" width="36" height="1" fill="#e2f6e2" />
<rect x="866" y="483" width="6" height="1" fill="#00e000" />
<rect x="901" y="483" width="36" height="1" fill="#e2f6e2" />
<rect x="916" y="483" width="6" height="1" fill="#00e000" />
<text transform="translate(179.25 551) scale(1 1.1)" font-size="13" text-anchor="middle" fill="#141470" stroke="#141470" stroke-width="0.05">T</text>
<text transform="translate(178.65 566.9) scale(1 0.95)" font-size="13" text-anchor="middle" fill="#7272aa" stroke="#7272aa" stroke-width="0.05">=</text>
<text transform="translate(178.65 581.9) scale(1 0.95)" font-size="13" text-anchor="middle" fill="#7272aa" stroke="#7272aa" stroke-width="0.05">=</text>
<text transform="translate(178.65 611.9) scale(1 0.95)" font-size="13" text-anchor="middle" fill="#7272aa" stroke="#7272aa" stroke-width="0.05">=</text>
<text transform="translate(179.25 596.1) scale(1 1)" font-size="13" text-anchor="middle" fill="#7272aa" stroke="#7272aa" stroke-width="0.05">-</text>
<text transform="translate(228.75 551) scale(1 1.1)" font-size="13" text-anchor="middle" fill="#141470" stroke="#141470" stroke-width="0.05">A</text>
<text transform="translate(228.15 566.9) scale(1 0.95)" font-size="13" text-anchor="middle" fill="#7272aa" stroke="#7272aa" stroke-width="0.05">=</text>
<text transform="translate(228.15 581.9) scale(1 0.95)" font-size="13" text-anchor="middle" fill="#7272aa" stroke="#7272aa" stroke-width="0.05">=</text>
<text transform="translate(228.15 611.9) scale(1 0.95)" font-size="13" text-anchor="middle" fill="#7272aa" stroke="#7272aa" stroke-width="0.05">=</text>
<text transform="translate(228.75 596.1) scale(1 1)" font-size="13" text-anchor="middle" fill="#7272aa" stroke="#7272aa" stroke-width="0.05">-</text>
<text transform="translate(278.25 551) scale(1 1.1)" font-size="13" text-anchor="middle" fill="#141470" stroke="#141470" stroke-width="0.05">T</text>
<text transform="translate(277.65 566.9) scale(1 0.95)" font-size="13" text-anchor="middle" fill="#7272aa" stroke="#7272aa" stroke-width="0.05">=</text>
<text transform="translate(277.65 581.9) scale(1 0.95)" font-size="13" text-anchor="middle" fill="#7272aa" stroke="#7272aa" stroke-width="0.05">=</text>
<text transform="translate(277.65 611.9) scale(1 0.95)" font-size="13" text-anchor="middle" fill="#7272aa" stroke="#7272aa" stroke-width="0.05">=</text>
<text transform="translate(278.25 596.1) scale(1 1)" font-size="13" text-anchor="middle" fill="#7272aa" stroke="#7272aa" stroke-width="0.05">-</text>
<text transform="translate(327.75 551) scale(1 1.1)" font-size="13" text-anchor="middle" fill="#141470" stroke="#141470" stroke-width="0.05">G</text>
<text transform="translate(327.15 566.9) scale(1 0.95)" font-size="13" text-anchor="middle" fill="#7272aa" stroke="#7272aa" stroke-width="0.05">=</text>
<text transform="translate(327.15 581.9) scale(1 0.95)" font-size="13" text-anchor="middle" fill="#7272aa" stroke="#7272aa" stroke-width="0.05">=</text>
<text transform="translate(327.15 611.9) scale(1 0.95)" font-size="13" text-anchor="middle" fill="#7272aa" stroke="#7272aa" stroke-width="0.05">=</text>
<text transform="translate(327.75 596.1) scale(1 1)" font-size="13" text-anchor="middle" fill="#7272aa" stroke="#7272aa" stroke-width="0.05">-</text>
<text transform="translate(377.25 551) scale(1 1.1)" font-size="13" text-anchor="middle" fill="#141470" stroke="#141470" stroke-width="0.05">T</text>
<text transform="translate(376.65 566.9) scale(1 0.95)" font-size="13" text-anchor="middle" fill="#7272aa" stroke="#7272aa" stroke-width="0.05">=</text>
<text transform="translate(376.65 581.9) scale(1 0.95)" font-size="13" text-anchor="middle" fill="#7272aa" stroke="#7272aa" stroke-width="0.05">=</text>
<text transform="translate(376.65 611.9) scale(1 0.95)" font-size="13" text-anchor="middle" fill="#7272aa" stroke="#7272aa" stroke-width="0.05">=</text>
<text transform="translate(377.25 596.1) scale(1 1)" font-size="13" text-anchor="middle" fill="#7272aa" stroke="#7272aa" stroke-width="0.05">-</text>
<text transform="translate(426.75 551) scale(1 1.1)" font-size="13" text-anchor="middle" fill="#141470" stroke="#141470" stroke-width="0.05">A</text>
<text transform="translate(426.15 566.9) scale(1 0.95)" font-size="13" text-anchor="middle" fill="#7272aa" stroke="#7272aa" stroke-width="0.05">=</text>
<text transform="translate(426.15 581.9) scale(1 0.95)" font-size="13" text-anchor="middle" fill="#7272aa" stroke="#7272aa" stroke-width="0.05">=</text>
<text transform="translate(426.15 611.9) scale(1 0.95)" font-size="13" text-anchor="middle" fill="#7272aa" stroke="#7272aa" stroke-width="0.05">=</text>
<text transform="translate(426.75 596.1) scale(1 1)" font-size="13" text-anchor="middle" fill="#7272aa" stroke="#7272aa" stroke-width="0.05">-</text>
<text transform="translate(476.25 551) scale(1 1.1)" font-size="13" text-anchor="middle" fill="#141470" stroke="#141470" stroke-width="0.05">T</text>
<text transform="translate(475.65 566.9) scale(1 0.95)" font-size="13" text-anchor="middle" fill="#7272aa" stroke="#7272aa" stroke-width="0.05">=</text>
<text transform="translate(475.65 581.9) scale(1 0.95)" font-size="13" text-anchor="middle" fill="#7272aa" stroke="#7272aa" stroke-width="0.05">=</text>
<text transform="translate(475.65 611.9) scale(1 0.95)" font-size="13" text-anchor="middle" fill="#7272aa" stroke="#7272aa" stroke-width="0.05">=</text>
<text transform="translate(476.25 596.1) scale(1 1)" font-size="13" text-anchor="middle" fill="#7272aa" stroke="#7272aa" stroke-width="0.05">-</text>
<text transform="translate(525.75 551) scale(1 1.1)" font-size="13" text-anchor="middle" fill="#141470" stroke="#141470" stroke-width="0.05">T</text>
<text transform="translate(525.15 566.9) scale(1 0.95)" font-size="13" text-anchor="middle" fill="#7272aa" stroke="#7272aa" stroke-width="0.05">=</text>
<text transform="translate(525.15 581.9) scale(1 0.95)" font-size="13" text-anchor="middle" fill="#7272aa" stroke="#7272aa" stroke-width="0.05">=</text>
<text transform="translate(525.15 611.9) scale(1 0.95)" font-size="13" text-anchor="middle" fill="#7272aa" stroke="#7272aa" stroke-width="0.05">=</text>
<text transform="translate(525.75 596.1) scale(1 1)" font-size="13" text-anchor="middle" fill="#7272aa" stroke="#7272aa" stroke-width="0.05">-</text>
<text transform="translate(575.25 551) scale(1 1.1)" font-size="13" text-anchor="middle" fill="#141470" stroke="#141470" stroke-width="0.05">T</text>
<text transform="translate(574.65 566.9) scale(1 0.95)" font-size="13" text-anchor="middle" fill="#7272aa" stroke="#7272aa" stroke-width="0.05">=</text>
<text transform="translate(574.65 581.9) scale(1 0.95)" font-size="13" text-anchor="middle" fill="#7272aa" stroke="#7272aa" stroke-width="0.05">=</text>
<text transform="translate(574.65 611.9) scale(1 0.95)" font-size="13" text-anchor="middle" fill="#7272aa" stroke="#7272aa" stroke-width="0.05">=</text>
<text transform="translate(575.25 596.1) scale(1 1)" font-size="13" text-anchor="middle" fill="#7272aa" stroke="#7272aa" stroke-width="0.05">-</text>
<text transform="translate(624.75 551) scale(1 1.1)" font-size="13" text-anchor="middle" fill="#141470" stroke="#141470" stroke-width="0.05">A</text>
<text transform="translate(624.15 566.9) scale(1 0.95)" font-size="13" text-anchor="middle" fill="#7272aa" stroke="#7272aa" stroke-width="0.05">=</text>
<text transform="translate(624.15 581.9) scale(1 0.95)" font-size="13" text-anchor="middle" fill="#7272aa" stroke="#7272aa" stroke-width="0.05">=</text>
<text transform="translate(624.15 611.9) scale(1 0.95)" font-size="13" text-anchor="middle" fill="#7272aa" stroke="#7272aa" stroke-width="0.05">=</text>
<text transform="translate(624.75 596.1) scale(1 1)" font-size="13" text-anchor="middle" fill="#7272aa" stroke="#7272aa" stroke-width="0.05">-</text>
<text transform="translate(674.25 551) scale(1 1.1)" font-size="13" text-anchor="middle" fill="#141470" stroke="#141470" stroke-width="0.05">T</text>
<text transform="translate(673.65 566.9) scale(1 0.95)" font-size="13" text-anchor="middle" fill="#7272aa" stroke="#7272aa" stroke-width="0.05">=</text>
<text transform="translate(673.65 581.9) scale(1 0.95)" font-size="13" text-anchor="middle" fill="#7272aa" stroke="#7272aa" stroke-width="0.05">=</text>
<text transform="translate(673.65 611.9) scale(1 0.95)" font-size="13" text-anchor="middle" fill="#7272aa" stroke="#7272aa" stroke-width="0.05">=</text>
<text transform="translate(674.25 596.1) scale(1 1)" font-size="13" text-anchor="middle" fill="#7272aa" stroke="#7272aa" stroke-width="0.05">-</text>
<text transform="translate(723.75 551) scale(1 1.1)" font-size="13" text-anchor="middle" fill="#141470" stroke="#141470" stroke-width="0.05">T</text>
<text transform="translate(723.15 566.9) scale(1 0.95)" font-size="13" text-anchor="middle" fill="#7272aa" stroke="#7272aa" stroke-width="0.05">=</text>
<text transform="translate(723.15 581.9) scale(1 0.95)" font-size="13" text-anchor="middle" fill="#7272aa" stroke="#7272aa" stroke-width="0.05">=</text>
<text transform="translate(723.15 611.9) scale(1 0.95)" font-size="13" text-anchor="middle" fill="#7272aa" stroke="#7272aa" stroke-width="0.05">=</text>
<text transform="translate(723.75 596.1) scale(1 1)" font-size="13" text-anchor="middle" fill="#7272aa" stroke="#7272aa" stroke-width="0.05">-</text>
<text transform="translate(773.25 551) scale(1 1.1)" font-size="13" text-anchor="middle" fill="#141470" stroke="#141470" stroke-width="0.05">T</text>
<text transform="translate(772.65 566.9) scale(1 0.95)" font-size="13" text-anchor="middle" fill="#7272aa" stroke="#7272aa" stroke-width="0.05">=</text>
<text transform="translate(772.65 581.9) scale(1 0.95)" font-size="13" text-anchor="middle" fill="#7272aa" stroke="#7272aa" stroke-width="0.05">=</text>
<text transform="translate(772.65 611.9) scale(1 0.95)" font-size="13" text-anchor="middle" fill="#7272aa" stroke="#7272aa" stroke-width="0.05">=</text>
<text transform="translate(773.25 596.1) scale(1 1)" font-size="13" text-anchor="middle" fill="#7272aa" stroke="#7272aa" stroke-width="0.05">-</text>
<text transform="translate(822.75 551) scale(1 1.1)" font-size="13" text-anchor="middle" fill="#141470" stroke="#141470" stroke-width="0.05">T</text>
<text transform="translate(822.15 566.9) scale(1 0.95)" font-size="13" text-anchor="middle" fill="#7272aa" stroke="#7272aa" stroke-width="0.05">=</text>
<text transform="translate(822.15 581.9) scale(1 0.95)" font-size="13" text-anchor="middle" fill="#7272aa" stroke="#7272aa" stroke-width="0.05">=</text>
<text transform="translate(822.15 611.9) scale(1 0.95)" font-size="13" text-anchor="middle" fill="#7272aa" stroke="#7272aa" stroke-width="0.05">=</text>
<text transform="translate(822.75 596.1) scale(1 1)" font-size="13" text-anchor="middle" fill="#7272aa" stroke="#7272aa" stroke-width="0.05">-</text>
<text transform="translate(872.25 551) scale(1 1.1)" font-size="13" text-anchor="middle" fill="#141470" stroke="#141470" stroke-width="0.05">T</text>
<text transform="translate(871.65 566.9) scale(1 0.95)" font-size="13" text-anchor="middle" fill="#7272aa" stroke="#7272aa" stroke-width="0.05">=</text>
<text transform="translate(871.65 581.9) scale(1 0.95)" font-size="13" text-anchor="middle" fill="#7272aa" stroke="#7272aa" stroke-width="0.05">=</text>
<text transform="translate(871.65 611.9) scale(1 0.95)" font-size="13" text-anchor="middle" fill="#7272aa" stroke="#7272aa" stroke-width="0.05">=</text>
<text transform="translate(872.25 596.1) scale(1 1)" font-size="13" text-anchor="middle" fill="#7272aa" stroke="#7272aa" stroke-width="0.05">-</text>
<text transform="translate(921.75 551) scale(1 1.1)" font-size="13" text-anchor="middle" fill="#141470" stroke="#141470" stroke-width="0.05">T</text>
<text transform="translate(921.15 566.9) scale(1 0.95)" font-size="13" text-anchor="middle" fill="#7272aa" stroke="#7272aa" stroke-width="0.05">=</text>
<text transform="translate(921.15 581.9) scale(1 0.95)" font-size="13" text-anchor="middle" fill="#7272aa" stroke="#7272aa" stroke-width="0.05">=</text>
<text transform="translate(921.15 611.9) scale(1 0.95)" font-size="13" text-anchor="middle" fill="#7272aa" stroke="#7272aa" stroke-width="0.05">=</text>
<text transform="translate(921.75 596.1) scale(1 1)" font-size="13" text-anchor="middle" fill="#7272aa" stroke="#7272aa" stroke-width="0.05">-</text>
<rect x="156" y="674" width="793" height="15" fill="#000" />
<text transform="translate(56.70 12.8) scale(1.0021 1.1)" font-size="13" fill="#000" stroke="#000" stroke-width="0.05">Window Position</text>
<text transform="translate(345.72 11.9) scale(0.9828 1.1)" font-size="13" fill="#000" stroke="#000" stroke-width="0.05">Human Feb. 2009 (GRCh37/hg19)</text>
<text transform="translate(553.01 11.9) scale(0.9927 1.1)" font-size="13" fill="#000" stroke="#000" stroke-width="0.05">chr5:76,538,499-76,538,514 (16 bp)</text>
<text transform="translate(118.16 29.7) scale(1.0400 1.1)" font-size="13" fill="#000" stroke="#000" stroke-width="0.05">Scale</text>
<text transform="translate(379.40 29.0) scale(1.0045 1.0)" font-size="13" fill="#000" stroke="#000" stroke-width="0.05">5 bases</text>
<text transform="translate(685.69 29.0) scale(1.0074 1.1)" font-size="13" fill="#000" stroke="#000" stroke-width="0.05">hg19</text>
<text transform="translate(121.86 46.6) scale(1.0400 1.1)" font-size="13" fill="#000" stroke="#000" stroke-width="0.05">chr5:</text>
<text transform="translate(188.70 46.9) scale(1.0032 1.0)" font-size="13" fill="#000" stroke="#000" stroke-width="0.05">76,538,500</text>
<text transform="translate(436.01 46.9) scale(0.9937 1.0)" font-size="13" fill="#000" stroke="#000" stroke-width="0.05">76,538,505</text>
<text transform="translate(683.60 46.9) scale(1.0032 1.0)" font-size="13" fill="#000" stroke="#000" stroke-width="0.05">76,538,510</text>
<text transform="translate(131.21 62.3) scale(0.9895 0.8)" font-size="13" fill="#000" stroke="#000" stroke-width="0.05">---&gt;</text>
<text transform="translate(431.29 77.6) scale(1.0072 1.1)" font-size="13" fill="#000" stroke="#000" stroke-width="0.05">GENCODE V49lift37 (2 items filtered out)</text>
<text transform="translate(108.59 91.7) scale(1.0098 1.1)" font-size="13" fill="#0c0c78" stroke="#0c0c78" stroke-width="0.05">PDE8B</text>
<text transform="translate(108.59 107.7) scale(1.0098 1.1)" font-size="13" fill="#0c0c78" stroke="#0c0c78" stroke-width="0.05">PDE8B</text>
<text transform="translate(108.59 123.7) scale(1.0098 1.1)" font-size="13" fill="#0c0c78" stroke="#0c0c78" stroke-width="0.05">PDE8B</text>
<text transform="translate(108.59 139.7) scale(1.0098 1.1)" font-size="13" fill="#0c0c78" stroke="#0c0c78" stroke-width="0.05">PDE8B</text>
<text transform="translate(108.59 155.7) scale(1.0098 1.1)" font-size="13" fill="#1780b4" stroke="#1780b4" stroke-width="0.05">PDE8B</text>
<text transform="translate(108.59 171.7) scale(1.0098 1.1)" font-size="13" fill="#0c0c78" stroke="#0c0c78" stroke-width="0.05">PDE8B</text>
<text transform="translate(490.70 187.9) scale(0.9975 1.0)" font-size="11" fill="#000" stroke="#000" stroke-width="0.05">RefSeq genes from NCBI</text>
<text transform="translate(59.40 202.6) scale(1.0022 1.1)" font-size="13" fill="#0c0c78" stroke="#0c0c78" stroke-width="0.05">RefSeq Curated</text>
<text transform="translate(444.81 219.2) scale(0.9870 1.0)" font-size="11" fill="#000" stroke="#000" stroke-width="0.05">Publications: Sequences in Scientific Articles</text>
<text transform="translate(86.39 233.6) scale(1.0095 1.1)" font-size="13" fill="#000" stroke="#000" stroke-width="0.05">Sequences</text>
<text transform="translate(117.17 249.8) scale(1.0250 1.1)" font-size="13" fill="#000" stroke="#000" stroke-width="0.05">SNPs</text>
<text transform="translate(367.40 266.8) scale(1.0038 1.1)" font-size="13" fill="#0f5f0f" stroke="#0f5f0f" stroke-width="0.05">OMIM Gene Phenotypes - Dark Green Can Be Disease-causing</text>
<text transform="translate(73.19 280.5) scale(1.0145 1.1)" font-size="13" fill="#0f5f0f" stroke="#0f5f0f" stroke-width="0.05">OMIM Genes</text>
<text transform="translate(435.00 297.2) scale(0.9996 1.0)" font-size="11" fill="#000" stroke="#000" stroke-width="0.05">Short Genetic Variants from dbSNP release 155</text>
<text transform="translate(25.31 312.2) scale(0.9937 1.1)" font-size="13" fill="#000" stroke="#000" stroke-width="0.05">Common dbSNP(155)</text>
<text transform="translate(265.39 329.3) scale(1.0085 1.1)" font-size="13" fill="#000" stroke="#000" stroke-width="0.05">Gene Expression in 54 tissues from GTEx RNA-seq of 17382 samples, 948 donors (V8, Aug 2019)</text>
<text transform="translate(108.59 368.7) scale(1.0098 1.1)" font-size="13" fill="#000" stroke="#000" stroke-width="0.05">PDE8B</text>
<text transform="translate(280.59 409.7) scale(1.0084 1.1)" font-size="13" fill="#000" stroke="#000" stroke-width="0.05">H3K27Ac Mark (Often Found Near Active Regulatory Elements) on 7 cell lines from ENCODE</text>
<text transform="translate(12.81 424.0) scale(0.9923 1.1)" font-size="13" fill="#000" stroke="#000" stroke-width="0.05">Layered H3K27Ac</text>
<text transform="translate(115.90 455.0) scale(1.0139 1.1)" font-size="13" fill="#40408c" stroke="#40408c" stroke-width="0.05">4.88 _</text>
<text transform="translate(404.79 456.0) scale(1.0072 1.1)" font-size="13" fill="#40408c" stroke="#40408c" stroke-width="0.05">100 vertebrates Basewise Conservation by PhyloP</text>
<text transform="translate(12.79 480.0) scale(1.0143 1.1)" font-size="13" fill="#40408c" stroke="#40408c" stroke-width="0.05">100 Vert. Cons</text>
<text transform="translate(118.37 505.0) scale(1.0312 1.1)" font-size="13" fill="#8c3232" stroke="#8c3232" stroke-width="0.05">-4.5 _</text>
<text transform="translate(444.78 522.2) scale(1.0196 1.1)" font-size="13" fill="#0c0c78" stroke="#0c0c78" stroke-width="0.05">Multiz Alignments of 100 Vertebrates</text>
<text transform="translate(120.37 535.5) scale(1.0276 1.1)" font-size="13" fill="#dc8214" stroke="#dc8214" stroke-width="0.05">Gaps</text>
<text transform="translate(110.70 550.8) scale(0.9975 1.1)" font-size="13" fill="#141470" stroke="#141470" stroke-width="0.05">Human</text>
<text transform="translate(107.69 565.7) scale(1.0119 1.1)" font-size="13" fill="#141470" stroke="#141470" stroke-width="0.05">Rhesus</text>
<text transform="translate(112.68 580.7) scale(1.0243 1.1)" font-size="13" fill="#0a640a" stroke="#0a640a" stroke-width="0.05">Mouse</text>
<text transform="translate(128.80 595.6) scale(0.9955 1.1)" font-size="13" fill="#141470" stroke="#141470" stroke-width="0.05">Dog</text>
<text transform="translate(100.71 611.0) scale(0.9940 1.1)" font-size="13" fill="#0a640a" stroke="#0a640a" stroke-width="0.05">Elephant</text>
<text transform="translate(104.27 626.6) scale(1.0311 1.1)" font-size="13" fill="#0a640a" stroke="#0a640a" stroke-width="0.05">Chicken</text>
<text transform="translate(83.39 641.6) scale(1.0106 1.1)" font-size="13" fill="#141470" stroke="#141470" stroke-width="0.05">X_tropicalis</text>
<text transform="translate(98.20 656.5) scale(1.0038 1.1)" font-size="13" fill="#0a640a" stroke="#0a640a" stroke-width="0.05">Zebrafish</text>
<text transform="translate(440.79 672.0) scale(1.0063 1.1)" font-size="13" fill="#000" stroke="#000" stroke-width="0.05">Repeating Elements by RepeatMasker</text>
<text transform="translate(67.20 685.5) scale(1.0048 1.1)" font-size="13" fill="#000" stroke="#000" stroke-width="0.05">RepeatMasker</text>
</g>
</svg>
</body></html>
